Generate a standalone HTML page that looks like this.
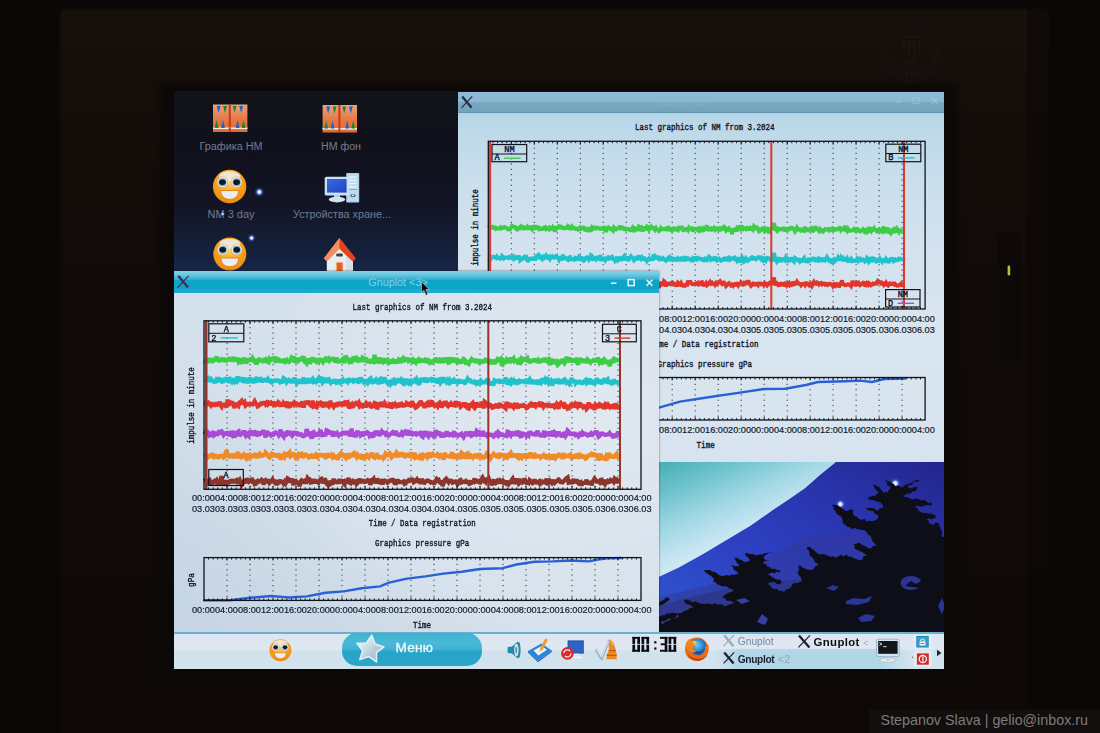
<!DOCTYPE html>
<html><head><meta charset="utf-8"><title>Gnuplot monitor</title>
<style>
html,body{margin:0;padding:0;background:#0b0707;}
body{width:1100px;height:733px;overflow:hidden;position:relative;font-family:"Liberation Sans",sans-serif;}
.abs{position:absolute;}
svg.layer{position:absolute;left:0;top:0;width:1100px;height:733px;overflow:visible;}
#bezel{left:60px;top:9px;width:990px;height:740px;background:linear-gradient(180deg,#17100b 0,#140e0a 90px,#100a09 300px,#0e0908 100%);border-radius:5px 5px 0 0;filter:blur(1.2px);}
#bezel2{left:160px;top:84px;width:798px;height:594px;background:#0b0807;filter:blur(2px);opacity:.85}
#screen{left:0;top:0;width:1100px;height:733px;clip-path:inset(91px 156px 64.5px 174px);}
#scr2{left:0;top:0;width:1100px;height:733px;filter:blur(0.45px);}
#desk{left:173px;top:90px;width:772px;height:580px;background:linear-gradient(180deg,#121219 0px,#11111d 61px,#121425 111px,#141b31 141px,#15213e 166px,#172746 181px,#172746 100%);}
.win{box-sizing:border-box;}
#wback{left:458px;top:91.5px;width:487px;height:370px;background:linear-gradient(180deg,#b2d3e5 21px,#bcd8e8 30px,#cadeec 88px,#d3e2ee 160px,#d9e5ef 240px,#d7e3ee 370px);}
#wback .tb{left:0;top:0;width:100%;height:21px;background:linear-gradient(180deg,#8ebcd4 0,#88b7cf 9.5px,#77a9c3 10.5px,#72a3be 19.5px,#6296b3 20px,#6296b3 21px);}
#wfront{left:173.5px;top:271.1px;width:485.3px;height:361.4px;background:linear-gradient(40deg,rgba(188,206,223,.65) 0,rgba(188,206,223,0) 38%),radial-gradient(ellipse 340px 240px at 400px 150px,#e1e8f0 0,#d9e4ee 60%,#d4e0eb 100%);box-shadow:0 0 2px rgba(10,20,40,.6);}
#wfront .tb{left:0;top:0;width:100%;height:21.6px;background:linear-gradient(180deg,#7fd0e4 0,#78cbe1 2.6px,#4fb9d6 6.2px,#2caccf 8.9px,#0ca6c9 9.5px,#0ca5c8 17.5px,#1eaad2 19px,#1fa8d0 21.6px);}
.ttl{color:#84d0e5;font-size:10.8px;line-height:21px;white-space:nowrap;}
#task{left:173px;top:631.5px;width:772px;height:38px;background:linear-gradient(180deg,#6cb0d2 0,#6cb0d2 1.6px,#dde6f0 2px,#dfe7f1 17px,#d0e2ec 20px,#d2e3ed 38px);}
#menu{left:342px;top:633px;width:140.2px;height:33.2px;border-radius:15px;background:linear-gradient(180deg,#3fb2d2 0,#4ab9d6 30%,#3eb1d1 50%,#27a4c9 56%,#2aa6cb 100%);}
#menu span{position:absolute;left:53.6px;top:7.2px;color:#eef8fb;font-size:13.6px;line-height:16px;letter-spacing:0.2px;-webkit-text-stroke:0.35px #eef8fb;}
.tk{font-size:10.2px;line-height:12px;white-space:nowrap;}
#wm{left:868.5px;top:708.5px;width:232px;height:25px;background:#130e0e;}
#wmt{left:880.6px;top:712.2px;color:#7f7a7a;font-size:14.3px;line-height:17px;white-space:nowrap;}
</style></head>
<body>
<div id="bezel" class="abs"></div>
<div id="bezel2" class="abs"></div>
<svg class="layer" viewBox="0 0 1100 733"><g opacity="0.8"><circle cx="911.3" cy="49.3" r="31.5" fill="none" stroke="#1a1210" stroke-width="1.6"/><circle cx="911.3" cy="49.3" r="26" fill="none" stroke="#1c1312" stroke-width="6" stroke-dasharray="2.2 1.8"/><circle cx="911.3" cy="49.3" r="20.5" fill="none" stroke="#181110" stroke-width="1.2"/><path d="M901 37 H921 M904 40 V52 M909 40 V56 M914 40 V56 M919 40 V52" stroke="#1e1513" stroke-width="2.2" fill="none"/><text x="911.3" y="66" text-anchor="middle" font-family="Liberation Sans, sans-serif" font-weight="bold" font-size="9" fill="#1e1513">98</text></g><rect x="998" y="232" width="24" height="130" fill="#0d0908" stroke="#130d0b" stroke-width="1" opacity="0.7"/><rect x="1007.6" y="265.5" width="2.6" height="10" rx="1.2" fill="#b4c23a"/><rect x="1027" y="8" width="24" height="725" fill="#0b0707" opacity="0.6"/></svg>
<div id="screen" class="abs"><div id="scr2" class="abs">
<div id="desk" class="abs"></div>
<svg class="layer" viewBox="0 0 1100 733">
<defs>
<radialGradient id="smg" cx="0.5" cy="0.35" r="0.7"><stop offset="0" stop-color="#ffd46a"/><stop offset="0.55" stop-color="#f6a21e"/><stop offset="1" stop-color="#e8860c"/></radialGradient>
<radialGradient id="star" cx="0.5" cy="0.5" r="0.5"><stop offset="0" stop-color="#ffffff"/><stop offset="0.3" stop-color="#c9d8ff"/><stop offset="0.55" stop-color="#4a66d8" stop-opacity="0.55"/><stop offset="1" stop-color="#2a3fb0" stop-opacity="0"/></radialGradient>
<linearGradient id="bg1" x1="0" y1="0" x2="0" y2="1"><stop offset="0" stop-color="#f0a078"/><stop offset="0.5" stop-color="#e37c48"/><stop offset="1" stop-color="#e06a30"/></linearGradient>
<linearGradient id="scr" x1="0" y1="0" x2="1" y2="1"><stop offset="0" stop-color="#2f6fe0"/><stop offset="1" stop-color="#2a3fc0"/></linearGradient>
<linearGradient id="roof" x1="0" y1="0" x2="1" y2="0"><stop offset="0" stop-color="#f7a070"/><stop offset="0.45" stop-color="#ee5a28"/><stop offset="1" stop-color="#d83c18"/></linearGradient>
<linearGradient id="silver" x1="0" y1="0" x2="1" y2="1"><stop offset="0" stop-color="#ffffff"/><stop offset="0.5" stop-color="#c4d4dc"/><stop offset="1" stop-color="#8fa6b4"/></linearGradient>
<radialGradient id="ffx" cx="0.45" cy="0.4" r="0.6"><stop offset="0" stop-color="#6fc8ee"/><stop offset="0.6" stop-color="#2c86d0"/><stop offset="1" stop-color="#1a4fa0"/></radialGradient>
<linearGradient id="sky" gradientUnits="userSpaceOnUse" x1="660" y1="462" x2="705" y2="562"><stop offset="0" stop-color="#46afb4"/><stop offset="0.29" stop-color="#6ec3cd"/><stop offset="0.58" stop-color="#a0d7e4"/><stop offset="0.83" stop-color="#c3e4f0"/><stop offset="1" stop-color="#d4ebf5"/></linearGradient>
<linearGradient id="hill" x1="0" y1="1" x2="1" y2="0"><stop offset="0" stop-color="#2f58cf"/><stop offset="0.4" stop-color="#2d40c2"/><stop offset="0.72" stop-color="#2833aa"/><stop offset="1" stop-color="#23248a"/></linearGradient>
<linearGradient id="sky2" x1="0" y1="0" x2="1" y2="0"><stop offset="0" stop-color="#ffffff" stop-opacity="0"/><stop offset="0.6" stop-color="#ffffff" stop-opacity="0.28"/></linearGradient>
<linearGradient id="hillshade" x1="0.2" y1="1" x2="1" y2="0"><stop offset="0" stop-color="#10104a" stop-opacity="0"/><stop offset="0.55" stop-color="#10104a" stop-opacity="0"/><stop offset="1" stop-color="#0c0c40" stop-opacity="0.55"/></linearGradient>
</defs>
<rect x="655" y="458" width="292" height="176" fill="url(#sky)"/><path d="M655 579 L658.6 577 L678.9 567.5 L702.8 554.3 L726.6 540 L750.5 525.7 L774.4 509 L788.7 499.4 L805 488.2 L820 475 L836 462 L840 458 L948 458 L948 636 L655 636 Z" fill="url(#hill)"/><path d="M655 598 C680 592 700 588 712 584 C740 574 770 556 800 540 C830 526 880 535 948 545 L948 640 L655 640 Z" fill="#33389a" opacity="0.55"/><path d="M655 607 C690 597 720 588 760 584 C800 578 850 575 948 575 L948 640 L655 640 Z" fill="#2c2f72" opacity="0.55"/><circle cx="840.4" cy="504.2" r="6" fill="url(#star)"/><circle cx="895.3" cy="483.4" r="6.5" fill="url(#star)"/><polygon points="773.7,551.5 771.4,552.1 769.1,552.8 767.3,554.3 764.9,555.6 763.7,557.9 766,560.2 769.2,560.3 766.7,560.7 764.3,561.2 762.5,563.2 765.5,563.7 767.3,566.3 769.7,567 771.7,569 774.4,568.7 777.3,569.9 780.4,570.3 779.2,572.7 776.9,571.5 774.4,573.4 772,572.3 769.7,573.5 767.3,574.6 769.9,575.2 772,577.1 774.4,578.2 776.7,579.6 779.8,579.5 781.6,581.8 780.9,583.5 779.2,584.2 776.7,584.1 774.7,581.9 772,582.3 769.4,582.6 767.3,584.2 770.1,585 771.6,588 774.4,589 777.1,589 779.1,591 781.9,590.7 784,592.6 785.6,589.7 788.7,589 791.3,587.2 792.3,584.2 795.2,582.9 798.3,583 800.4,581.4 803.5,582.4 805.8,581.2 807.9,579.4 808.4,582.5 806.7,585.5 807.8,588.6 807.4,591.6 808.6,594.7 806.7,597.7 807.4,600.8 806.6,603.8 806.8,606.9 808.4,609.9 808.2,613 808.7,616 808.8,619.1 809,622.1 808.4,625.2 807.6,628.2 809.1,631.3 807.9,634.3 804.7,633.9 801.5,634.8 798.3,634.8 795.1,633.5 791.9,634.4 788.7,634.8 785.6,634.4 782.4,633.8 779.2,635.5 776,633.1 772.8,635.6 769.6,633.7 766.5,633.5 763.3,635.6 760.1,633.6 756.9,634.7 753.7,634.1 750.5,635.6 747.3,635.5 744.2,635.2 741,633.2 737.8,635.1 734.6,633.7 731.4,633.2 728.2,633.2 725.1,634.8 721.9,634.7 718.7,634.3 715.5,633.6 712.3,635.4 709.1,633.7 706,633.6 702.8,633.4 699.6,635.6 696.4,633.2 693.2,635.4 690,634.8 686.8,634.1 683.7,633.3 680.5,634.8 677.3,633.2 674.1,634.2 670.9,634.8 667.7,634.8 664.6,635.2 661.4,635.4 658.2,635.3 655,634.3 655.5,631.2 656.3,628 655,624.8 657.2,623.3 659.5,622.5 662.5,624.2 664.6,622.4 667,621.6 669.2,620.4 671.5,619.1 674.1,618.8 676.6,617.8 678.9,616.4 677.7,614.8 678.9,612.9 681.5,612.9 683.6,611.2 686,610.5 688.4,609.5 690.5,607.8 693.2,608.1 691.5,605.4 688.4,604.5 685.5,603.6 684.1,600.9 684.9,599.2 687.8,600.1 690.8,600.9 693,602.4 695.8,601.3 698,602.8 701.1,603.6 704.3,604.3 707.5,603.3 709.9,603.9 712.2,604.6 714.8,603.2 717.1,604.5 719.5,604.6 722,604.2 724.2,606.3 726.7,605.7 728.9,604.4 731.4,604 733.8,603.3 731.8,601.3 729.3,600.8 726.7,600.9 725,598.1 721.9,597.3 724.2,595.4 726.7,593.7 729,592.5 731.7,591.9 733.8,590.2 731.4,589 728.8,588.3 726.7,586.6 724.2,586.2 721.7,586.3 719.4,585.1 717.1,584.2 715.3,581.9 712.3,581.8 714.1,580.4 713.5,578.2 711.3,576.2 708.7,574.6 706.3,572.9 704,571.1 705.2,569.9 707.7,570.1 710.2,570.1 712.3,571.8 714.9,572.1 717.1,573.4 719.3,574.9 721.6,575.9 724.3,575.8 726.6,575.1 729.2,575.8 731.4,574.6 733.9,574.9 736.3,574.3 738.6,573.4 736.5,571.3 733.8,569.9 733.2,567.2 731.4,565.1 733.3,565.3 735,566.3 737.5,566.2 739.8,565.1 737.6,563.7 736.2,561.5 735,559.1 733.8,556.7 735.4,558 737.4,557.9 739.1,559.5 741.7,559.9 743.4,561.5 745.9,562.2 748.2,561.1 750.5,560.3 748.9,558.4 747,556.7 745.1,555.1 745.8,552.7 748.1,553.6 750.5,554.3 753,553.9 755.3,555.3 757.7,555.1 760.1,554.3 762.7,554.6 764.9,553.1 767.9,553 770.9,552.8" fill="#0e0e18"/><polygon points="655,603.3 656.6,601.6 659.3,602.5 661,600.9 663.7,600.3 665.5,598 668.1,597.3 669.8,599.7 667.2,601.5 664.6,603.3 662.6,604.4 660.4,604.9 658.6,606.2 656.6,605.8 655,606.9 653.9,605.1" fill="#0e0e18"/><polygon points="655,616.4 657.2,615.1 659.9,616.5 662.2,615.2 664.7,615.3 666.8,613.4 669.3,613.4 671.7,612.9 674.1,612.7 676.5,613.2 678.9,612.9 677.1,614.2 676.5,616.4 674.5,618.3 672.1,619.4 669,618.3 666.9,620 664.6,621.1 661.9,621.3 660.3,624.1 657.4,624 655,624.8 655.6,622 654.3,619.2" fill="#0e0e18"/><polygon points="925.2,477.2 923.2,478.3 921.3,479.6 919.2,480.3 917.6,482 914.9,481 913.2,482.7 911.9,485 909.2,485.1 907.3,486.3 909.3,488.2 912,488.2 914.9,486.7 918,487.5 916.7,489.2 915.6,491 912.7,491.6 910.4,493.8 907.3,493.4 905,494.9 902.5,495.8 904.7,497.1 907.3,497.3 909.6,498.2 912.5,499.4 915.8,498.5 918.7,499.3 921.6,500.6 924.2,500.1 926.4,501.6 928.5,503.1 931.1,502.5 932.3,505.4 929.5,505.3 926.7,505 924,505.9 920.8,506.4 917.6,505.7 914.4,506.6 916.7,507.4 918,509.4 919.2,511.3 921.5,512.4 923.8,513.1 926.4,512.9 928.7,513.7 931.5,513.5 933.7,514.8 935.9,516.1 935.3,517.9 933.5,518.5 931.2,519.3 928.7,518.2 926.4,519.2 928.5,520.3 928.8,523.1 931.1,524 933.6,524.8 935.8,522.4 938.3,523.3 939.4,525.2 939.9,527.3 940.7,529.3 942.3,531.4 941.7,534 941.9,536.4 944.9,537.5 947.9,536.4 948.9,539.6 947.6,542.7 948.8,545.9 947.6,549.1 946.8,552.2 948.6,555.4 949.1,558.5 948.9,561.7 947.8,564.9 949.1,568 948.9,571.2 947.9,574.3 946.8,577.5 948.1,580.6 948.1,583.8 947.5,587 948.9,590.1 947.6,593.3 948.7,596.4 947.6,599.6 946.7,602.8 949,605.9 947.7,609.1 947.6,612.2 948.8,615.4 948.5,618.6 946.6,621.7 946.6,624.9 948.8,628 947.3,631.2 947.9,634.3 944.7,633.2 941.6,635 938.4,634.1 935.3,635.5 932.1,634.7 929,633.9 925.8,634.1 922.7,633.6 919.6,635.4 916.4,634.7 913.3,633.4 910.1,634.1 907,634.5 903.8,634.6 900.7,633.1 897.6,634.2 894.4,635.6 891.3,633.6 888.1,634.8 885,634.5 881.8,635.1 878.7,634.5 875.5,634.8 872.4,635.4 869.3,634 866.1,635.4 863,633.6 859.8,635.6 856.7,633.6 853.5,633.5 850.4,634.4 847.3,633.8 844.1,635 841,633.7 837.8,634.5 834.7,635 831.5,633.1 828.4,634.6 825.2,634.7 822.1,633.4 819,634.7 815.8,633.9 812.7,635.2 809.5,633.5 806.4,635 803.2,635.5 800.1,633.1 796.9,635.2 793.8,634.3 795,631.2 795.1,628.1 794.1,625 792.5,621.9 792.7,618.8 793,615.7 793.5,612.6 794.1,609.5 795,606.4 793.8,603.3 795.6,602.9 797.4,603.3 795.7,601.7 795.9,599.3 795,597.3 793.8,594.8 793.5,592.2 794.4,589.4 794.6,586.8 793.8,584.2 796.7,584.4 798.6,586.6 800.3,584.1 802.2,581.8 801.4,579.2 800.4,576.7 798.3,574.8 797.4,572.3 799.1,570.2 798.2,567.2 799.8,565.1 801.5,566.8 803.4,568.1 805.7,568.7 808,570 810.5,569.5 812.9,569.9 814.3,567.5 816.2,565.8 818.9,565.1 817.3,563.4 815.1,562.5 814.1,560.3 812.8,557.7 810,556.1 809.3,553.1 809.2,550.9 807.1,549.4 806.9,547.2 809.4,546.8 811.2,548 812.9,549.6 815,551.1 816.8,552.9 818.9,554.3 821.3,554.3 823.8,554.1 826.1,555.2 828.4,555.5 830.7,557 833.2,556.2 835.5,557.6 838,556.7 840.4,554.8 843.9,556.4 846.3,554.3 848.3,556.4 851.1,556.8 853.5,557.9 855.5,558.8 857.5,559.6 859.5,560.3 862.5,559.6 863.6,556.2 866.7,555.5 864.5,553.4 861.9,552 859.5,550.7 856.9,550 854.7,548.4 854.7,545.8 853.5,543.6 855.9,544.2 858.3,542.6 860.7,543.6 862.5,545.2 864.9,545.9 867,547.2 869,548.4 871.5,547.9 873.4,545.7 876.2,546 874.8,543.4 872.7,541.4 871.4,538.8 870.7,535.9 867.7,534.4 866.7,531.7 864.5,530.2 862,529.9 859.6,529.5 857.1,529.3 854.9,527.7 852,529.2 850,527.2 847.5,526.9 845.3,524.8 842.8,523.3 842.6,520.2 841.6,517.3 839.4,515.5 836.8,514.1 835.6,511.3 833.7,509.6 833.5,506.9 832,504.9 834.6,504.7 837.1,504.9 839.2,506.6 841.8,507.9 844,509.7 846.3,511.3 848.8,510.2 851.1,509 853.4,510.8 852.9,514.1 854.7,516.1 857.3,516.9 859.2,519.2 861.9,519.7 864.4,518.7 866.5,521.5 869,520.8 871.4,520.9 874.4,520.8 876.8,519.6 878.6,517.3 877.7,514.8 874.6,514 873.8,511.3 871.3,510.9 868.8,510.4 866.7,509 865.5,507.3 868.4,508.3 871.4,507.8 873.8,508.3 875.8,509.5 877.4,511.3 878.9,509.3 880.9,508.1 883.4,507.8 882.7,505.1 881.2,503 878.6,501.8 876.1,501.5 874,500 871.4,500.1 869,499.4 867.8,497 870.2,496.7 872.6,495.9 875,495.8 877,494.3 878.6,492.2 876.5,490.7 874.9,488.7 873.8,486.3 872.6,483.9 875,485.1 877.4,486.3 879.5,487.3 880.7,489.3 882.2,491 883.7,492.9 886.6,491.5 888.1,493.4 888.4,490.6 890.5,488.7 890,486.3 887.2,485.3 887,482.7 885.8,481.4 885.8,479.6 887.8,481.4 890.5,481.5 891.9,483.3 894.2,484.2 895.3,486.3 897.9,485.5 900.2,486.5 902.5,487.5 904.6,485.3 907.3,483.9 910,483.4 912.6,482.6 914.4,480.3 917.3,480.2 920.1,479.8 922.8,479" fill="#0e0e18"/><ellipse cx="911" cy="583" rx="10.5" ry="7" fill="#2a3596"/><path d="M905 586 l6 -5 l5 3 l7 -4 l-2 8 z" fill="#0e0e18"/><path d="M846 601 l8 -3 l10 1 l8 -3 l-3 6 l-12 3 l-11 -1 z" fill="#2a3596"/><path d="M858 618 l8 -4 l9 2 l-4 5 l-10 1 z" fill="#2a3596"/><path d="M826 588 l7 -3 l6 2 l-5 4 z" fill="#2a3596"/><path d="M757 622 l5 -8 l6 5 l-3 6 z" fill="#34409c"/><path d="M736 600 l8 -2 l6 3 l-8 3 z" fill="#34409c"/><path d="M938 606 l4 -8 l3 8 l-3 8 z" fill="#2a3596"/><rect x="655" y="628.5" width="292" height="6" fill="#0e0e18"/><g transform="translate(213 104.5)"><rect x="0" y="0" width="34.4" height="27.5" fill="url(#bg1)"/><rect x="15.7" y="0" width="2.2" height="27.5" fill="#cf3a1c"/><rect x="0" y="23" width="34.4" height="1.6" fill="#f4ece6"/><rect x="15.7" y="23" width="2.2" height="1.6" fill="#cf3a1c"/><polygon points="3.7,1.5 7.5,1.5 5.6,8.5" fill="#1f62c8"/><polygon points="10.1,1.5 13.9,1.5 12,8.5" fill="#0f8a3a"/><polygon points="19.7,1.5 23.5,1.5 21.6,8.5" fill="#0f8a3a"/><polygon points="26.3,1.5 30.1,1.5 28.2,8.5" fill="#1f62c8"/><polygon points="1.7,23.4 5.5,23.4 3.6,15.5" fill="#0f8a3a"/><polygon points="8.1,23.4 11.9,23.4 10,15.5" fill="#1f62c8"/><polygon points="22.7,23.4 26.5,23.4 24.6,15.5" fill="#1f62c8"/><polygon points="28.7,23.4 32.5,23.4 30.6,15.5" fill="#0f8a3a"/></g><g transform="translate(322.6 105)"><rect x="0" y="0" width="34.4" height="27.5" fill="url(#bg1)"/><rect x="15.7" y="0" width="2.2" height="27.5" fill="#cf3a1c"/><rect x="0" y="23" width="34.4" height="1.6" fill="#f4ece6"/><rect x="15.7" y="23" width="2.2" height="1.6" fill="#cf3a1c"/><polygon points="3.7,1.5 7.5,1.5 5.6,8.5" fill="#1f62c8"/><polygon points="10.1,1.5 13.9,1.5 12,8.5" fill="#0f8a3a"/><polygon points="19.7,1.5 23.5,1.5 21.6,8.5" fill="#0f8a3a"/><polygon points="26.3,1.5 30.1,1.5 28.2,8.5" fill="#1f62c8"/><polygon points="1.7,23.4 5.5,23.4 3.6,15.5" fill="#0f8a3a"/><polygon points="8.1,23.4 11.9,23.4 10,15.5" fill="#1f62c8"/><polygon points="22.7,23.4 26.5,23.4 24.6,15.5" fill="#1f62c8"/><polygon points="28.7,23.4 32.5,23.4 30.6,15.5" fill="#0f8a3a"/></g><text x="231" y="150.3" font-family="Liberation Sans, sans-serif" font-size="10" fill="#747c8e" text-anchor="middle" textLength="63" lengthAdjust="spacingAndGlyphs">Графика НМ</text><text x="341" y="150.3" font-family="Liberation Sans, sans-serif" font-size="10" fill="#747c8e" text-anchor="middle" textLength="40" lengthAdjust="spacingAndGlyphs">НМ фон</text><circle cx="259.3" cy="192" r="5.5" fill="url(#star)"/><circle cx="251.6" cy="238" r="4.5" fill="url(#star)"/><g transform="translate(229.6 186.5) scale(1.006)"><circle r="16.6" fill="url(#smg)"/><ellipse cx="0" cy="-10.2" rx="10.5" ry="5" fill="#f1ecf0" opacity="0.85"/><circle cx="-7.1" cy="-4.6" r="5.7" fill="#e8956a" opacity="0.6"/><circle cx="-7.1" cy="-4.4" r="5.1" fill="#e6f3fa"/><circle cx="-7.1" cy="-4.2" r="4" fill="#62aacd"/><ellipse cx="-7.1" cy="-4.3" rx="3.3" ry="2.7" fill="#16161f"/><circle cx="7" cy="-4.6" r="5.7" fill="#e8956a" opacity="0.6"/><circle cx="7" cy="-4.4" r="5.1" fill="#e6f3fa"/><circle cx="7" cy="-4.2" r="4" fill="#62aacd"/><ellipse cx="7" cy="-4.3" rx="3.3" ry="2.7" fill="#16161f"/><path d="M-9 4 H9.1 Q8.4 12.8 0 12.8 Q-8.4 12.8 -9 4 Z" fill="#ececf4" stroke="#e07c10" stroke-width="0.9"/></g><rect x="346.2" y="173" width="13" height="29.6" rx="1" fill="#a9cfe6"/><rect x="347.4" y="174.2" width="10.6" height="27.2" fill="#bcdcee"/><rect x="349" y="176.3" width="7.6" height="1.3" fill="#e8f4fb"/><rect x="349" y="179.6" width="7.6" height="1.3" fill="#e8f4fb"/><rect x="349" y="182.9" width="7.6" height="1.3" fill="#e8f4fb"/><rect x="349" y="186.2" width="7.6" height="1.3" fill="#e8f4fb"/><rect x="348.5" y="189" width="8.6" height="0.9" fill="#7ea8c4"/><ellipse cx="353" cy="195.6" rx="2.8" ry="1.7" fill="#50688a"/><ellipse cx="353" cy="195.4" rx="1.3" ry="0.8" fill="#e6eef4"/><rect x="324.7" y="176.7" width="24.4" height="18.8" rx="1.6" fill="#c7e2f4"/><rect x="327" y="179" width="19.6" height="13.6" fill="url(#scr)"/><rect x="334" y="195" width="6" height="3" fill="#b4d0e2"/><ellipse cx="337" cy="199.6" rx="8.3" ry="2.8" fill="#cfe4f0"/><text x="231" y="217.6" font-family="Liberation Sans, sans-serif" font-size="10" fill="#747c8e" text-anchor="middle" textLength="47" lengthAdjust="spacingAndGlyphs">NM 3 day</text><circle cx="222.6" cy="214" r="2.6" fill="url(#star)"/><text x="342" y="217.6" font-family="Liberation Sans, sans-serif" font-size="10" fill="#747c8e" text-anchor="middle" textLength="98" lengthAdjust="spacingAndGlyphs">Устройства хране...</text><g transform="translate(229.8 254) scale(0.994)"><circle r="16.6" fill="url(#smg)"/><ellipse cx="0" cy="-10.2" rx="10.5" ry="5" fill="#f1ecf0" opacity="0.85"/><circle cx="-7.1" cy="-4.6" r="5.7" fill="#e8956a" opacity="0.6"/><circle cx="-7.1" cy="-4.4" r="5.1" fill="#e6f3fa"/><circle cx="-7.1" cy="-4.2" r="4" fill="#62aacd"/><ellipse cx="-7.1" cy="-4.3" rx="3.3" ry="2.7" fill="#16161f"/><circle cx="7" cy="-4.6" r="5.7" fill="#e8956a" opacity="0.6"/><circle cx="7" cy="-4.4" r="5.1" fill="#e6f3fa"/><circle cx="7" cy="-4.2" r="4" fill="#62aacd"/><ellipse cx="7" cy="-4.3" rx="3.3" ry="2.7" fill="#16161f"/><path d="M-9 4 H9.1 Q8.4 12.8 0 12.8 Q-8.4 12.8 -9 4 Z" fill="#ececf4" stroke="#e07c10" stroke-width="0.9"/></g><polygon points="326.8,259 339.4,247.5 353,259 353,272 326.8,272" fill="#e9eef2"/><polygon points="339.4,247.5 353,259 353,272 346,272 346,256" fill="#cfd8e0" opacity="0.6"/><polygon points="339.4,238 355.8,258.5 352.6,261.2 339.4,248.6 327,261.2 323.8,258.5" fill="url(#roof)"/><polygon points="339.4,238 355.8,258.5 352.6,261.2 339.4,248.6" fill="#e2421c"/><polygon points="339.4,238 323.8,258.5 327,261.2 339.4,248.6" fill="#f58c5e"/><rect x="336.2" y="253.6" width="6.6" height="3" rx="1" fill="#5a3a30"/><rect x="335.6" y="261.8" width="8" height="10" fill="#f4d8c8"/><rect x="336.6" y="262.6" width="6" height="9.4" fill="#e2641e"/></svg>
<div id="wback" class="abs win"><div class="tb abs"></div></div>
<svg class="layer" viewBox="0 0 1100 733"><g opacity="1"><path d="M462.2 96.4 L471.6 107.8" stroke="#2a2f44" stroke-width="2.3" stroke-linecap="butt"/><path d="M472.2 96.4 L461.6 107.8" stroke="#2a2f44" stroke-width="1.2"/></g><g stroke="#a9cfe2" stroke-width="1.2" fill="none" opacity="0.55"><path d="M896.5 102 H901.5"/><rect x="913" y="98" width="6" height="5.6"/><path d="M931.6 98 L937.4 104 M937.4 98 L931.6 104"/></g><text x="652" y="106" font-family="Liberation Sans, sans-serif" font-size="10.8" fill="#8fbbd2" opacity="0.5">Gnuplot &lt;2&gt;</text><path d="M511.3 142.3 V308 M534.3 142.3 V308 M557.3 142.3 V308 M580.3 142.3 V308 M603.2 142.3 V308 M626.2 142.3 V308 M649.2 142.3 V308 M672.2 142.3 V308 M695.2 142.3 V308 M718.2 142.3 V308 M741.2 142.3 V308 M764.2 142.3 V308 M787.2 142.3 V308 M810.2 142.3 V308 M833.1 142.3 V308 M856.1 142.3 V308 M879.1 142.3 V308 M902.1 142.3 V308" stroke="#0c1018" stroke-opacity="0.95" stroke-width="0.95" stroke-dasharray="1.1 4.2" fill="none"/><polyline points="489,225.3 490,228.2 491,225.6 492,228.7 493,227.1 494,227.9 495,227.4 496,228.9 497,228.1 498,228.4 499,228.6 500,227.7 501,229.8 502,226.2 503,227.8 504,227.8 505,227 506,227.6 507,228.2 508,229.4 509,229.3 510,229.4 511,227.6 512,225.8 513,226.4 514,226.8 515,226.9 516,229.1 517,229.5 518,226.6 519,229.7 520,227 521,226.3 522,227.8 523,228.4 524,227.4 525,228.3 526,228.3 527,227.1 528,229.6 529,227 530,227.2 531,228.2 532,229.3 533,225.4 534,229.7 535,226.5 536,226.6 537,227.7 538,227.4 539,229 540,228.2 541,229 542,229.1 543,228.8 544,227.3 545,227 546,228.9 547,227.9 548,228.5 549,229.4 550,227.4 551,227.9 552,229.9 553,227.4 554,228.7 555,231.7 556,226.4 557,228.4 558,227.9 559,226.2 560,226.4 561,227.4 562,227 563,228.3 564,228.1 565,228.3 566,227.6 567,227.8 568,226 569,226.9 570,228.8 571,228.7 572,226.5 573,227.6 574,227.6 575,229 576,229.1 577,228.6 578,229.6 579,228.7 580,227.6 581,228.9 582,228.1 583,227.5 584,227.6 585,229.8 586,230.1 587,230.2 588,227.5 589,230.4 590,230 591,230.2 592,227.3 593,228.1 594,226 595,229.6 596,228.3 597,227.8 598,227.8 599,228.4 600,228.9 601,228.3 602,228.4 603,228.9 604,226.4 605,228.8 606,231.9 607,228.6 608,227.7 609,229.6 610,227.1 611,229.3 612,229.1 613,230.4 614,227.5 615,228.6 616,229.4 617,228.4 618,228.4 619,228.3 620,225.7 621,228.5 622,228.4 623,227.8 624,228.9 625,228.5 626,229.6 627,228.8 628,228.9 629,229.6 630,230.2 631,229.3 632,230 633,227.3 634,228.2 635,230.1 636,229.2 637,227.1 638,231 639,226.8 640,227.6 641,227.2 642,231.3 643,228.9 644,226.7 645,229.3 646,228.9 647,226.5 648,227 649,229.6 650,228.3 651,226.8 652,229.2 653,226.4 654,228.8 655,230.1 656,228.4 657,230.4 658,228.4 659,230.9 660,230.3 661,228.1 662,229.2 663,229.3 664,228.7 665,229.4 666,229.5 667,227.9 668,227.7 669,230.5 670,228.7 671,229.8 672,230.7 673,229.2 674,227.1 675,230.6 676,229.1 677,228.9 678,229.8 679,226.4 680,228.5 681,228 682,227.6 683,230.1 684,230.2 685,229.8 686,229 687,229.3 688,230.4 689,227.6 690,228.6 691,228.7 692,228.4 693,231.3 694,229.3 695,228.7 696,228.9 697,228.7 698,230.4 699,230.9 700,228.1 701,228.6 702,229.9 703,228.5 704,229.9 705,229.3 706,227.2 707,225.7 708,230.5 709,229.1 710,229.3 711,228.4 712,229.5 713,228.4 714,227.6 715,229.3 716,227.1 717,230.7 718,226.8 719,231.4 720,228.1 721,228.1 722,228.9 723,227.5 724,226.8 725,228.5 726,230.4 727,229 728,229.8 729,228.5 730,229.8 731,229.9 732,234 733,228.9 734,231 735,228.2 736,231.4 737,228.3 738,229.4 739,228.4 740,225.4 741,229.2 742,230.7 743,227.3 744,228 745,228.3 746,229.2 747,227.9 748,228.9 749,228.3 750,230.1 751,227.9 752,228.6 753,229.7 754,226.3 755,227.4 756,228.2 757,227.4 758,228.5 759,231.5 760,231.1 761,230.3 762,228.7 763,229.3 764,228.3 765,231.1 766,230.4 767,227.5 768,229 769,233.2 770,230.9 771,229.1 772,228.6 773,227.9 774,223 775,229.1 776,229.5 777,230.7 778,228.4 779,228.9 780,228.9 781,230.6 782,227.9 783,229.6 784,226.8 785,231.4 786,229.3 787,229.2 788,229.9 789,229.3 790,226.9 791,229.6 792,227.8 793,228.3 794,229.4 795,231.5 796,230.2 797,227.6 798,229.1 799,229.7 800,228.1 801,230.6 802,230.1 803,230.6 804,229 805,230.3 806,228.7 807,229.3 808,230.3 809,230.1 810,229 811,228.2 812,230.6 813,231 814,230.2 815,226.2 816,228.8 817,228.7 818,229.6 819,231 820,228.9 821,230 822,231.4 823,231.7 824,230.3 825,229.1 826,229.6 827,229.4 828,229.1 829,230.4 830,229.1 831,229.6 832,228.8 833,231.5 834,227.7 835,229.5 836,229.7 837,229.1 838,229.3 839,228.8 840,226.7 841,230.1 842,229 843,229.1 844,229.5 845,225.8 846,229.6 847,231 848,229 849,230.8 850,230.4 851,230.7 852,230.5 853,229.7 854,228.9 855,230 856,232.2 857,228.3 858,229.6 859,230.6 860,231.2 861,229.2 862,231.5 863,229.7 864,231.1 865,228.8 866,230.5 867,232.3 868,231.2 869,227 870,230.4 871,231.4 872,229.3 873,229.7 874,228.4 875,230.7 876,228.5 877,231.5 878,231.5 879,228.8 880,231.2 881,230.2 882,231.2 883,226.9 884,228.3 885,231.5 886,231.1 887,227.6 888,230.5 889,233.2 890,231.3 891,233.1 892,231.8 893,229.6 894,228.9 895,231.4 896,231 897,228.7 898,230.2 899,232 900,230.3 901,230.5 902,231.4 903,231.1 904,231.8" fill="none" stroke="#3ecd46" stroke-width="3.9" stroke-linejoin="miter" stroke-miterlimit="2.2"/>
<polyline points="489,258.8 490,261 491,257.3 492,256.8 493,257.2 494,256.9 495,257.7 496,258.2 497,256.5 498,257.9 499,258 500,258.9 501,258.3 502,255.9 503,256.8 504,258.5 505,257.6 506,257.5 507,257.6 508,258 509,256.9 510,257.1 511,258.1 512,257.9 513,256.6 514,259.2 515,258.6 516,257.2 517,257.9 518,257.6 519,255.7 520,260.4 521,259.5 522,259.4 523,258.3 524,257.1 525,257.8 526,255.2 527,260.2 528,260.7 529,259.5 530,258.7 531,258.9 532,258.4 533,258.7 534,257.3 535,260.3 536,257.3 537,256 538,255.2 539,258.6 540,256.7 541,258.1 542,259.1 543,256.9 544,258 545,256.8 546,255.5 547,257.8 548,258.1 549,256.9 550,258.8 551,257 552,256.1 553,257.4 554,257.8 555,257 556,256 557,256.8 558,258 559,259.8 560,257.7 561,257.7 562,260.3 563,254.7 564,259.2 565,256.9 566,258.7 567,259.4 568,260 569,257.6 570,257.2 571,260.5 572,257.8 573,259.5 574,259.8 575,258.1 576,259.1 577,258.1 578,258.7 579,256.5 580,257.3 581,259.1 582,258.4 583,259.7 584,257.4 585,259.3 586,258 587,257.2 588,257.5 589,259.8 590,258.7 591,255.2 592,255.9 593,259.1 594,258.6 595,258.2 596,259.4 597,257.7 598,258.2 599,258.7 600,255.4 601,257.2 602,260.8 603,258.6 604,258.8 605,260.1 606,257.1 607,258.5 608,257.4 609,258.6 610,257.8 611,257.2 612,256.8 613,260.2 614,258 615,260.6 616,259.1 617,256.7 618,260.1 619,259 620,258.4 621,260.6 622,258.3 623,257.4 624,256.3 625,260.4 626,258.1 627,256.6 628,259.7 629,259.6 630,258 631,256.3 632,257.8 633,258 634,260.3 635,259.2 636,257.9 637,258.9 638,258.8 639,255.7 640,257.7 641,259 642,257.7 643,260.3 644,256.8 645,260.7 646,258.2 647,260.9 648,259.5 649,258.4 650,260.6 651,258.2 652,260.4 653,257 654,258 655,256.2 656,257.5 657,257.2 658,258.3 659,256.2 660,259.3 661,259.5 662,259.2 663,258.1 664,259.1 665,259.9 666,260.7 667,259.5 668,258 669,257.3 670,261.1 671,257.8 672,258.2 673,259.7 674,258.9 675,259.7 676,259 677,259.7 678,258.2 679,259.2 680,259.5 681,260.8 682,256.8 683,259.8 684,259.9 685,257.6 686,257.8 687,260.8 688,257.4 689,259.3 690,259.3 691,259.8 692,261.6 693,258.4 694,259.3 695,256.7 696,259 697,259.6 698,258 699,258.7 700,258.6 701,259.3 702,257.8 703,261.3 704,259.9 705,258.8 706,260 707,260.4 708,258.5 709,256.7 710,257.5 711,259.8 712,259.1 713,258.5 714,260.7 715,256.7 716,258.8 717,260.4 718,259.5 719,258.7 720,260 721,260.8 722,259.9 723,259.2 724,260.9 725,258.4 726,258.6 727,259.4 728,257.9 729,257.5 730,259.8 731,259.1 732,258.4 733,258.1 734,259 735,257.8 736,258.9 737,260.7 738,259.1 739,257.6 740,262.7 741,259.3 742,257.3 743,258.9 744,261.8 745,261.2 746,258.5 747,259.8 748,260.8 749,260 750,258.6 751,257.9 752,259.9 753,257.5 754,257.9 755,258.2 756,259.3 757,258.1 758,257.2 759,257.9 760,258.5 761,256 762,260.2 763,260.8 764,258.2 765,258.6 766,260.2 767,257.8 768,257.9 769,258.7 770,259.3 771,260.9 772,257.6 773,261.5 774,252.9 775,257.8 776,258.4 777,261.8 778,260.8 779,258.7 780,258.9 781,261.7 782,260.1 783,259.1 784,258.9 785,260.1 786,257.2 787,258.4 788,260.5 789,259.3 790,260.3 791,259.4 792,257.6 793,260.5 794,261.6 795,258 796,258.7 797,259.2 798,260.4 799,260 800,261.6 801,260.3 802,260.6 803,259.1 804,258 805,262.2 806,259.1 807,262.8 808,260.5 809,258.1 810,260.6 811,260 812,259.8 813,257.4 814,259.2 815,260.3 816,259.4 817,260.6 818,260.9 819,258.5 820,259.4 821,259.2 822,261.7 823,258.1 824,259.7 825,260.5 826,259.3 827,257.1 828,258.7 829,260.4 830,259.7 831,260.1 832,263.8 833,260.1 834,259.2 835,260.9 836,259.6 837,259.5 838,257.5 839,259.4 840,259.4 841,257.2 842,258.9 843,258.1 844,261.2 845,259.3 846,259.6 847,258.3 848,261.1 849,260.9 850,259.9 851,258.8 852,261.3 853,261.2 854,260.5 855,260.7 856,260.7 857,259 858,260.6 859,258.5 860,258.5 861,260.5 862,260.2 863,259.5 864,260.4 865,261.6 866,260.8 867,257.7 868,258.5 869,261.8 870,260.6 871,261.9 872,257 873,259.2 874,257.7 875,260.4 876,261.5 877,261.2 878,259.8 879,260.5 880,258.7 881,260.1 882,261.5 883,258.6 884,260.5 885,261 886,258.7 887,259.9 888,261.5 889,261.6 890,259.5 891,258.8 892,258.7 893,260.3 894,258.1 895,260.5 896,260 897,259.7 898,261.1 899,257.1 900,260.5 901,258.1 902,260.3 903,258.1 904,260.8" fill="none" stroke="#1fc3cb" stroke-width="3.9" stroke-linejoin="miter" stroke-miterlimit="2.2"/>
<polyline points="489,282.4 490,282.7 491,281.9 492,284.5 493,281.2 494,282.8 495,283.2 496,281.9 497,283.7 498,281.3 499,282.2 500,283.2 501,281.7 502,281.9 503,284.1 504,283.9 505,283.2 506,281.8 507,283.9 508,284.2 509,281.9 510,284 511,285.2 512,281.8 513,284.7 514,282.9 515,283 516,282.4 517,285 518,282.5 519,282.3 520,283.5 521,284 522,284.2 523,283 524,284.3 525,284.1 526,285 527,282.7 528,283.7 529,284.3 530,283.7 531,283.8 532,284.1 533,282.4 534,283.6 535,283.1 536,282.3 537,284.1 538,282.3 539,283.6 540,283.8 541,281.5 542,285.2 543,283.6 544,283.5 545,282.1 546,281.9 547,285.3 548,283 549,283.2 550,285.8 551,284.5 552,284.1 553,281.7 554,283.9 555,284.7 556,283 557,282.6 558,283.6 559,282.2 560,282.7 561,280.3 562,283.5 563,283.5 564,279.9 565,281.6 566,282.7 567,285.4 568,281.9 569,283.1 570,283.5 571,283.4 572,281.3 573,283.9 574,283.8 575,283.8 576,282.8 577,281.2 578,285.8 579,283.5 580,284 581,281.4 582,283.3 583,281.5 584,279.1 585,285.6 586,283.4 587,283.9 588,283.4 589,282.5 590,284.4 591,284.8 592,280.1 593,284 594,281.5 595,285.7 596,282.3 597,285.7 598,284.9 599,283.6 600,286 601,284.4 602,283.5 603,284.6 604,281.4 605,285.2 606,283.6 607,283.9 608,285.3 609,283.5 610,283.3 611,283.4 612,284 613,284.5 614,284.3 615,283.4 616,282.8 617,285.1 618,281.4 619,282.3 620,285.6 621,283.4 622,282.7 623,282.5 624,285.7 625,282.2 626,283.4 627,285.1 628,283.9 629,285.2 630,281.5 631,282.4 632,282.4 633,281.8 634,281.1 635,284 636,284.4 637,282.5 638,282.6 639,283.1 640,279.7 641,284.6 642,283.1 643,283.8 644,282.6 645,285.4 646,287.5 647,282.1 648,282.7 649,283.8 650,285.8 651,284.6 652,282.2 653,282.3 654,282.7 655,285.1 656,282.4 657,285.1 658,286.3 659,284.2 660,285.5 661,283.6 662,282.2 663,285.9 664,281.1 665,282 666,286.6 667,282.6 668,284.7 669,282.6 670,285.4 671,283.1 672,282.7 673,282.8 674,284.5 675,284.9 676,282.7 677,286.6 678,282.7 679,283.5 680,284.4 681,283 682,285.3 683,285.7 684,285.6 685,285.7 686,283.6 687,286.3 688,280.6 689,283.6 690,280.8 691,283.1 692,284.1 693,284.1 694,284.3 695,283.9 696,283.3 697,284 698,282.9 699,284.4 700,283.6 701,282.3 702,282.2 703,286.1 704,284 705,284.4 706,283.1 707,285.3 708,284.4 709,283.2 710,281.8 711,283.6 712,282.9 713,285 714,282.4 715,284.5 716,282.9 717,284.1 718,283 719,282 720,281.2 721,282.9 722,284 723,282.7 724,282.5 725,284.1 726,286.1 727,285 728,283.8 729,283.1 730,284.3 731,285.5 732,284.7 733,285.6 734,283 735,286.3 736,282.7 737,284.1 738,285.4 739,282.8 740,284.9 741,282.6 742,283.7 743,284.4 744,283 745,283.8 746,282.3 747,281.8 748,282.9 749,282.2 750,284.4 751,285.9 752,284.8 753,283.7 754,284.6 755,283.9 756,284.5 757,283.9 758,285 759,282.3 760,284.6 761,282.6 762,285.5 763,282.4 764,284.8 765,283.2 766,283.8 767,285.3 768,283.8 769,284 770,282.6 771,282.4 772,283.2 773,283.1 774,277.4 775,285.5 776,282 777,283.3 778,284.8 779,286.3 780,282.7 781,284.7 782,282.5 783,286 784,284.3 785,284.8 786,281.8 787,285 788,283.7 789,282.9 790,285.5 791,284.9 792,286.1 793,281.6 794,283.9 795,284.1 796,283.5 797,281.6 798,282.8 799,283.9 800,283.9 801,285.3 802,284.1 803,283.7 804,283.8 805,285.1 806,283.2 807,283.4 808,284.3 809,285.2 810,282.3 811,283.8 812,285.8 813,284.1 814,282 815,283.5 816,283.8 817,282.3 818,282.7 819,284.3 820,283.3 821,282.9 822,284.4 823,283.6 824,283.9 825,283.7 826,286 827,283 828,284.8 829,284.3 830,283.7 831,284.3 832,284.4 833,286.3 834,284.8 835,285.6 836,282.6 837,287 838,283 839,287.4 840,283.7 841,282.9 842,280.6 843,284.3 844,284.5 845,285.2 846,285 847,284.7 848,284.2 849,284.8 850,284.9 851,286 852,282.5 853,282.7 854,281.3 855,284.7 856,284.8 857,284.3 858,281.1 859,284.6 860,285.3 861,284.6 862,283.6 863,283 864,281.7 865,286.3 866,285.1 867,283.3 868,284.7 869,283.1 870,283.9 871,285.3 872,284.6 873,283.6 874,284.1 875,283.8 876,282.8 877,283.3 878,280.9 879,281.6 880,282 881,283.4 882,282.7 883,283.4 884,285.1 885,284.4 886,282.8 887,284.8 888,285.5 889,283.7 890,283.4 891,285.3 892,282.9 893,284.7 894,282.2 895,284.9 896,284.8 897,285.7 898,285.6 899,285.4 900,284.7 901,283.7 902,286.4 903,284.5 904,284.9" fill="none" stroke="#e2352b" stroke-width="3.9" stroke-linejoin="miter" stroke-miterlimit="2.2"/>
<rect x="488.9" y="141.3" width="2.2" height="167.7" fill="#e2352b"/><rect x="770.3" y="141.3" width="2" height="167.7" fill="#e2352b"/><rect x="903" y="141.3" width="2" height="167.7" fill="#e2352b"/><rect x="488.3" y="141.3" width="436.8" height="167.7" fill="none" stroke="#10131c" stroke-width="1.3"/><path d="M511.3 141.3 v3.4 M511.3 309 v-3.4 M534.3 141.3 v3.4 M534.3 309 v-3.4 M557.3 141.3 v3.4 M557.3 309 v-3.4 M580.3 141.3 v3.4 M580.3 309 v-3.4 M603.2 141.3 v3.4 M603.2 309 v-3.4 M626.2 141.3 v3.4 M626.2 309 v-3.4 M649.2 141.3 v3.4 M649.2 309 v-3.4 M672.2 141.3 v3.4 M672.2 309 v-3.4 M695.2 141.3 v3.4 M695.2 309 v-3.4 M718.2 141.3 v3.4 M718.2 309 v-3.4 M741.2 141.3 v3.4 M741.2 309 v-3.4 M764.2 141.3 v3.4 M764.2 309 v-3.4 M787.2 141.3 v3.4 M787.2 309 v-3.4 M810.2 141.3 v3.4 M810.2 309 v-3.4 M833.1 141.3 v3.4 M833.1 309 v-3.4 M856.1 141.3 v3.4 M856.1 309 v-3.4 M879.1 141.3 v3.4 M879.1 309 v-3.4 M902.1 141.3 v3.4 M902.1 309 v-3.4 M492.9 141.3 v1.9 M492.9 309 v-1.9 M497.5 141.3 v1.9 M497.5 309 v-1.9 M502.1 141.3 v1.9 M502.1 309 v-1.9 M506.7 141.3 v1.9 M506.7 309 v-1.9 M515.9 141.3 v1.9 M515.9 309 v-1.9 M520.5 141.3 v1.9 M520.5 309 v-1.9 M525.1 141.3 v1.9 M525.1 309 v-1.9 M529.7 141.3 v1.9 M529.7 309 v-1.9 M538.9 141.3 v1.9 M538.9 309 v-1.9 M543.5 141.3 v1.9 M543.5 309 v-1.9 M548.1 141.3 v1.9 M548.1 309 v-1.9 M552.7 141.3 v1.9 M552.7 309 v-1.9 M561.9 141.3 v1.9 M561.9 309 v-1.9 M566.5 141.3 v1.9 M566.5 309 v-1.9 M571.1 141.3 v1.9 M571.1 309 v-1.9 M575.7 141.3 v1.9 M575.7 309 v-1.9 M584.9 141.3 v1.9 M584.9 309 v-1.9 M589.5 141.3 v1.9 M589.5 309 v-1.9 M594.1 141.3 v1.9 M594.1 309 v-1.9 M598.6 141.3 v1.9 M598.6 309 v-1.9 M607.8 141.3 v1.9 M607.8 309 v-1.9 M612.4 141.3 v1.9 M612.4 309 v-1.9 M617 141.3 v1.9 M617 309 v-1.9 M621.6 141.3 v1.9 M621.6 309 v-1.9 M630.8 141.3 v1.9 M630.8 309 v-1.9 M635.4 141.3 v1.9 M635.4 309 v-1.9 M640 141.3 v1.9 M640 309 v-1.9 M644.6 141.3 v1.9 M644.6 309 v-1.9 M653.8 141.3 v1.9 M653.8 309 v-1.9 M658.4 141.3 v1.9 M658.4 309 v-1.9 M663 141.3 v1.9 M663 309 v-1.9 M667.6 141.3 v1.9 M667.6 309 v-1.9 M676.8 141.3 v1.9 M676.8 309 v-1.9 M681.4 141.3 v1.9 M681.4 309 v-1.9 M686 141.3 v1.9 M686 309 v-1.9 M690.6 141.3 v1.9 M690.6 309 v-1.9 M699.8 141.3 v1.9 M699.8 309 v-1.9 M704.4 141.3 v1.9 M704.4 309 v-1.9 M709 141.3 v1.9 M709 309 v-1.9 M713.6 141.3 v1.9 M713.6 309 v-1.9 M722.8 141.3 v1.9 M722.8 309 v-1.9 M727.4 141.3 v1.9 M727.4 309 v-1.9 M732 141.3 v1.9 M732 309 v-1.9 M736.6 141.3 v1.9 M736.6 309 v-1.9 M745.8 141.3 v1.9 M745.8 309 v-1.9 M750.4 141.3 v1.9 M750.4 309 v-1.9 M755 141.3 v1.9 M755 309 v-1.9 M759.6 141.3 v1.9 M759.6 309 v-1.9 M768.8 141.3 v1.9 M768.8 309 v-1.9 M773.4 141.3 v1.9 M773.4 309 v-1.9 M778 141.3 v1.9 M778 309 v-1.9 M782.6 141.3 v1.9 M782.6 309 v-1.9 M791.8 141.3 v1.9 M791.8 309 v-1.9 M796.4 141.3 v1.9 M796.4 309 v-1.9 M801 141.3 v1.9 M801 309 v-1.9 M805.6 141.3 v1.9 M805.6 309 v-1.9 M814.8 141.3 v1.9 M814.8 309 v-1.9 M819.3 141.3 v1.9 M819.3 309 v-1.9 M823.9 141.3 v1.9 M823.9 309 v-1.9 M828.5 141.3 v1.9 M828.5 309 v-1.9 M837.7 141.3 v1.9 M837.7 309 v-1.9 M842.3 141.3 v1.9 M842.3 309 v-1.9 M846.9 141.3 v1.9 M846.9 309 v-1.9 M851.5 141.3 v1.9 M851.5 309 v-1.9 M860.7 141.3 v1.9 M860.7 309 v-1.9 M865.3 141.3 v1.9 M865.3 309 v-1.9 M869.9 141.3 v1.9 M869.9 309 v-1.9 M874.5 141.3 v1.9 M874.5 309 v-1.9 M883.7 141.3 v1.9 M883.7 309 v-1.9 M888.3 141.3 v1.9 M888.3 309 v-1.9 M892.9 141.3 v1.9 M892.9 309 v-1.9 M897.5 141.3 v1.9 M897.5 309 v-1.9 M906.7 141.3 v1.9 M906.7 309 v-1.9 M911.3 141.3 v1.9 M911.3 309 v-1.9 M915.9 141.3 v1.9 M915.9 309 v-1.9 M920.5 141.3 v1.9 M920.5 309 v-1.9 " stroke="#10131c" stroke-width="1" fill="none"/><rect x="492" y="144.5" width="34.7" height="17.2" fill="none" stroke="#10131c" stroke-width="1.2"/><path d="M492 154 H526.7" stroke="#10131c" stroke-width="1"/><text x="509.4" y="152.4" text-anchor="middle" font-family="Liberation Mono, monospace" font-size="8.6" fill="#10172a" stroke="#10172a" stroke-width="0.38">NM</text><text x="494.5" y="160.4" font-family="Liberation Mono, monospace" font-size="8.6" fill="#10172a" stroke="#10172a" stroke-width="0.38">A</text><path d="M504 158.2 H520.7" stroke="#3ecd46" stroke-width="1.4"/><rect x="885.8" y="144.2" width="35" height="17.5" fill="none" stroke="#10131c" stroke-width="1.2"/><path d="M885.8 153.5 H920.8" stroke="#10131c" stroke-width="1"/><text x="903.3" y="151.9" text-anchor="middle" font-family="Liberation Mono, monospace" font-size="8.6" fill="#10172a" stroke="#10172a" stroke-width="0.38">NM</text><text x="888.3" y="160.4" font-family="Liberation Mono, monospace" font-size="8.6" fill="#10172a" stroke="#10172a" stroke-width="0.38">B</text><path d="M897.8 157.9 H914.8" stroke="#1fc3cb" stroke-width="1.4"/><rect x="885.6" y="289.6" width="34.4" height="17.4" fill="none" stroke="#10131c" stroke-width="1.2"/><path d="M885.6 299 H920" stroke="#10131c" stroke-width="1"/><text x="902.8" y="297.4" text-anchor="middle" font-family="Liberation Mono, monospace" font-size="8.6" fill="#10172a" stroke="#10172a" stroke-width="0.38">NM</text><text x="888.1" y="305.7" font-family="Liberation Mono, monospace" font-size="8.6" fill="#10172a" stroke="#10172a" stroke-width="0.38">D</text><path d="M897.6 303.3 H914" stroke="#aa4bd7" stroke-width="1.4"/><text x="475.3" y="322" font-family="Liberation Sans, sans-serif" font-size="9.2" fill="#141b2e" stroke="#141b2e" stroke-width="0.2" textLength="459.5" lengthAdjust="spacingAndGlyphs">00:0004:0008:0012:0016:0020:0000:0004:0008:0012:0016:0020:0000:0004:0008:0012:0016:0020:0000:0004:00</text><text x="475.3" y="332.6" font-family="Liberation Sans, sans-serif" font-size="9.2" fill="#141b2e" stroke="#141b2e" stroke-width="0.2" textLength="459.5" lengthAdjust="spacingAndGlyphs">03.0303.0303.0303.0303.0303.0304.0304.0304.0304.0304.0304.0305.0305.0305.0305.0305.0305.0306.0306.03</text><text x="635" y="130" font-family="Liberation Mono, monospace" font-size="9.4" fill="#10172a" stroke="#10172a" stroke-width="0.38" textLength="139.5" lengthAdjust="spacingAndGlyphs" >Last graphics of NM from 3.2024</text><text transform="translate(477.6 227.5) rotate(-90)" text-anchor="middle" font-family="Liberation Mono, monospace" font-size="9.4" fill="#10172a" stroke="#10172a" stroke-width="0.38" textLength="76.5" lengthAdjust="spacingAndGlyphs">impulse in minute</text><text x="650.2" y="347" font-family="Liberation Mono, monospace" font-size="9.4" fill="#10172a" stroke="#10172a" stroke-width="0.38" textLength="108.4" lengthAdjust="spacingAndGlyphs" >Time / Data registration</text><text x="657.4" y="366.5" font-family="Liberation Mono, monospace" font-size="9.4" fill="#10172a" stroke="#10172a" stroke-width="0.38" textLength="94.6" lengthAdjust="spacingAndGlyphs" >Graphics pressure gPa</text><path d="M511.3 378.5 V419 M534.3 378.5 V419 M557.3 378.5 V419 M580.3 378.5 V419 M603.2 378.5 V419 M626.2 378.5 V419 M649.2 378.5 V419 M672.2 378.5 V419 M695.2 378.5 V419 M718.2 378.5 V419 M741.2 378.5 V419 M764.2 378.5 V419 M787.2 378.5 V419 M810.2 378.5 V419 M833.1 378.5 V419 M856.1 378.5 V419 M879.1 378.5 V419 M902.1 378.5 V419" stroke="#0c1018" stroke-opacity="0.95" stroke-width="0.95" stroke-dasharray="1.1 4.2" fill="none"/><polyline points="488.3,420 540,419.5 600,415 640,410 659,407.6 680,401.6 710,397 740,392.6 764,389 785,388.7 806,385 818,382 845,381.2 860,380.6 872,382 884,379 905,378.5" fill="none" stroke="#2a5fd6" stroke-width="2.4" stroke-linejoin="round" stroke-linecap="round"/><rect x="488.3" y="377.5" width="436.8" height="42.5" fill="none" stroke="#10131c" stroke-width="1.3"/><path d="M511.3 377.5 v2.8 M511.3 420 v-2.8 M534.3 377.5 v2.8 M534.3 420 v-2.8 M557.3 377.5 v2.8 M557.3 420 v-2.8 M580.3 377.5 v2.8 M580.3 420 v-2.8 M603.2 377.5 v2.8 M603.2 420 v-2.8 M626.2 377.5 v2.8 M626.2 420 v-2.8 M649.2 377.5 v2.8 M649.2 420 v-2.8 M672.2 377.5 v2.8 M672.2 420 v-2.8 M695.2 377.5 v2.8 M695.2 420 v-2.8 M718.2 377.5 v2.8 M718.2 420 v-2.8 M741.2 377.5 v2.8 M741.2 420 v-2.8 M764.2 377.5 v2.8 M764.2 420 v-2.8 M787.2 377.5 v2.8 M787.2 420 v-2.8 M810.2 377.5 v2.8 M810.2 420 v-2.8 M833.1 377.5 v2.8 M833.1 420 v-2.8 M856.1 377.5 v2.8 M856.1 420 v-2.8 M879.1 377.5 v2.8 M879.1 420 v-2.8 M902.1 377.5 v2.8 M902.1 420 v-2.8 M492.9 377.5 v1.9 M492.9 420 v-1.9 M497.5 377.5 v1.9 M497.5 420 v-1.9 M502.1 377.5 v1.9 M502.1 420 v-1.9 M506.7 377.5 v1.9 M506.7 420 v-1.9 M515.9 377.5 v1.9 M515.9 420 v-1.9 M520.5 377.5 v1.9 M520.5 420 v-1.9 M525.1 377.5 v1.9 M525.1 420 v-1.9 M529.7 377.5 v1.9 M529.7 420 v-1.9 M538.9 377.5 v1.9 M538.9 420 v-1.9 M543.5 377.5 v1.9 M543.5 420 v-1.9 M548.1 377.5 v1.9 M548.1 420 v-1.9 M552.7 377.5 v1.9 M552.7 420 v-1.9 M561.9 377.5 v1.9 M561.9 420 v-1.9 M566.5 377.5 v1.9 M566.5 420 v-1.9 M571.1 377.5 v1.9 M571.1 420 v-1.9 M575.7 377.5 v1.9 M575.7 420 v-1.9 M584.9 377.5 v1.9 M584.9 420 v-1.9 M589.5 377.5 v1.9 M589.5 420 v-1.9 M594.1 377.5 v1.9 M594.1 420 v-1.9 M598.6 377.5 v1.9 M598.6 420 v-1.9 M607.8 377.5 v1.9 M607.8 420 v-1.9 M612.4 377.5 v1.9 M612.4 420 v-1.9 M617 377.5 v1.9 M617 420 v-1.9 M621.6 377.5 v1.9 M621.6 420 v-1.9 M630.8 377.5 v1.9 M630.8 420 v-1.9 M635.4 377.5 v1.9 M635.4 420 v-1.9 M640 377.5 v1.9 M640 420 v-1.9 M644.6 377.5 v1.9 M644.6 420 v-1.9 M653.8 377.5 v1.9 M653.8 420 v-1.9 M658.4 377.5 v1.9 M658.4 420 v-1.9 M663 377.5 v1.9 M663 420 v-1.9 M667.6 377.5 v1.9 M667.6 420 v-1.9 M676.8 377.5 v1.9 M676.8 420 v-1.9 M681.4 377.5 v1.9 M681.4 420 v-1.9 M686 377.5 v1.9 M686 420 v-1.9 M690.6 377.5 v1.9 M690.6 420 v-1.9 M699.8 377.5 v1.9 M699.8 420 v-1.9 M704.4 377.5 v1.9 M704.4 420 v-1.9 M709 377.5 v1.9 M709 420 v-1.9 M713.6 377.5 v1.9 M713.6 420 v-1.9 M722.8 377.5 v1.9 M722.8 420 v-1.9 M727.4 377.5 v1.9 M727.4 420 v-1.9 M732 377.5 v1.9 M732 420 v-1.9 M736.6 377.5 v1.9 M736.6 420 v-1.9 M745.8 377.5 v1.9 M745.8 420 v-1.9 M750.4 377.5 v1.9 M750.4 420 v-1.9 M755 377.5 v1.9 M755 420 v-1.9 M759.6 377.5 v1.9 M759.6 420 v-1.9 M768.8 377.5 v1.9 M768.8 420 v-1.9 M773.4 377.5 v1.9 M773.4 420 v-1.9 M778 377.5 v1.9 M778 420 v-1.9 M782.6 377.5 v1.9 M782.6 420 v-1.9 M791.8 377.5 v1.9 M791.8 420 v-1.9 M796.4 377.5 v1.9 M796.4 420 v-1.9 M801 377.5 v1.9 M801 420 v-1.9 M805.6 377.5 v1.9 M805.6 420 v-1.9 M814.8 377.5 v1.9 M814.8 420 v-1.9 M819.3 377.5 v1.9 M819.3 420 v-1.9 M823.9 377.5 v1.9 M823.9 420 v-1.9 M828.5 377.5 v1.9 M828.5 420 v-1.9 M837.7 377.5 v1.9 M837.7 420 v-1.9 M842.3 377.5 v1.9 M842.3 420 v-1.9 M846.9 377.5 v1.9 M846.9 420 v-1.9 M851.5 377.5 v1.9 M851.5 420 v-1.9 M860.7 377.5 v1.9 M860.7 420 v-1.9 M865.3 377.5 v1.9 M865.3 420 v-1.9 M869.9 377.5 v1.9 M869.9 420 v-1.9 M874.5 377.5 v1.9 M874.5 420 v-1.9 M883.7 377.5 v1.9 M883.7 420 v-1.9 M888.3 377.5 v1.9 M888.3 420 v-1.9 M892.9 377.5 v1.9 M892.9 420 v-1.9 M897.5 377.5 v1.9 M897.5 420 v-1.9 M906.7 377.5 v1.9 M906.7 420 v-1.9 M911.3 377.5 v1.9 M911.3 420 v-1.9 M915.9 377.5 v1.9 M915.9 420 v-1.9 M920.5 377.5 v1.9 M920.5 420 v-1.9 " stroke="#10131c" stroke-width="1" fill="none"/><text x="475.3" y="433" font-family="Liberation Sans, sans-serif" font-size="9.2" fill="#141b2e" stroke="#141b2e" stroke-width="0.2" textLength="459.5" lengthAdjust="spacingAndGlyphs">00:0004:0008:0012:0016:0020:0000:0004:0008:0012:0016:0020:0000:0004:0008:0012:0016:0020:0000:0004:00</text><text x="696.5" y="448" font-family="Liberation Mono, monospace" font-size="9.4" fill="#10172a" stroke="#10172a" stroke-width="0.38" textLength="18.4" lengthAdjust="spacingAndGlyphs" >Time</text></svg>
<div id="wfront" class="abs win"><div class="tb abs"></div><div class="ttl abs" style="left:194.8px;top:0.6px">Gnuplot &lt;3&gt;</div></div>
<svg class="layer" viewBox="0 0 1100 733"><g opacity="1"><path d="M178.2 275.8 L188 287.6" stroke="#34305a" stroke-width="2.3" stroke-linecap="butt"/><path d="M188.6 275.8 L177.6 287.6" stroke="#34305a" stroke-width="1.2"/></g><g stroke="#eaf7fb" stroke-width="1.5" fill="none"><path d="M611 283.2 H616.5"/><rect x="628.2" y="279.6" width="6" height="6"/><path d="M646.6 279.8 L652.4 285.8 M652.4 279.8 L646.6 285.8"/></g><path d="M227 321.8 V488.3 M250 321.8 V488.3 M273 321.8 V488.3 M296 321.8 V488.3 M319 321.8 V488.3 M342 321.8 V488.3 M365 321.8 V488.3 M388 321.8 V488.3 M411 321.8 V488.3 M434 321.8 V488.3 M457 321.8 V488.3 M480 321.8 V488.3 M503 321.8 V488.3 M526 321.8 V488.3 M549 321.8 V488.3 M572 321.8 V488.3 M595 321.8 V488.3 M618 321.8 V488.3" stroke="#0c1018" stroke-opacity="0.95" stroke-width="0.95" stroke-dasharray="1.1 4.2" fill="none"/><polyline points="204.6,360.3 205.6,361.8 206.6,359.8 207.6,360 208.6,360.9 209.6,359.8 210.6,360.4 211.6,358.7 212.6,361.1 213.6,360.8 214.6,359.4 215.6,359.1 216.6,356.5 217.6,359.8 218.6,360.7 219.6,360.7 220.6,360.3 221.6,359.2 222.6,359.8 223.6,357.9 224.6,361.8 225.6,360.1 226.6,360.5 227.6,359.6 228.6,358.8 229.6,359.7 230.6,359.9 231.6,358.7 232.6,358.5 233.6,359.7 234.6,358.9 235.6,359.9 236.6,360.2 237.6,357.7 238.6,361.6 239.6,360.4 240.6,361.1 241.6,363.9 242.6,358 243.6,359.5 244.6,359.5 245.6,361.2 246.6,363.4 247.6,358.5 248.6,360.2 249.6,360.2 250.6,359.5 251.6,359.9 252.6,358 253.6,359.5 254.6,361.3 255.6,361.1 256.6,364.4 257.6,360.6 258.6,359.5 259.6,359.5 260.6,360.7 261.6,360.7 262.6,360.3 263.6,362.7 264.6,359.5 265.6,359.1 266.6,361.2 267.6,361.9 268.6,362.3 269.6,359 270.6,360.1 271.6,359.5 272.6,357.9 273.6,360.9 274.6,356.4 275.6,362.8 276.6,358.8 277.6,359 278.6,359.4 279.6,360.1 280.6,362.5 281.6,359.4 282.6,362.7 283.6,360.9 284.6,359 285.6,361.4 286.6,360.4 287.6,363 288.6,359.4 289.6,361.2 290.6,360.2 291.6,357.7 292.6,358.6 293.6,356.3 294.6,362.6 295.6,357.6 296.6,363.2 297.6,359.1 298.6,360.5 299.6,359.1 300.6,358.8 301.6,360.4 302.6,357.7 303.6,356.6 304.6,361.6 305.6,362.2 306.6,363.3 307.6,360.2 308.6,360.1 309.6,362 310.6,362.2 311.6,360.2 312.6,357.4 313.6,361.6 314.6,358.1 315.6,361.4 316.6,362 317.6,361.1 318.6,361.6 319.6,358.5 320.6,359.9 321.6,360.1 322.6,361.5 323.6,358.6 324.6,360.1 325.6,358.8 326.6,360 327.6,358.9 328.6,358.3 329.6,360.5 330.6,359.3 331.6,359.3 332.6,358.7 333.6,358.8 334.6,360.8 335.6,361.1 336.6,358 337.6,360.1 338.6,361.4 339.6,361.3 340.6,361.1 341.6,360 342.6,359.1 343.6,360.5 344.6,362.9 345.6,355.7 346.6,357.9 347.6,359.9 348.6,357.9 349.6,362 350.6,361.6 351.6,361.9 352.6,360.6 353.6,356.4 354.6,361.3 355.6,359.8 356.6,357.8 357.6,358.5 358.6,360.7 359.6,360.1 360.6,358 361.6,361.9 362.6,357.9 363.6,358.6 364.6,359 365.6,357.5 366.6,362.7 367.6,360.8 368.6,361.4 369.6,361.7 370.6,359.2 371.6,361.5 372.6,361.8 373.6,360.1 374.6,354.9 375.6,361.6 376.6,361 377.6,361.6 378.6,361.9 379.6,357.6 380.6,363.2 381.6,359.6 382.6,359.8 383.6,362 384.6,361.2 385.6,358.6 386.6,360.8 387.6,360 388.6,363 389.6,362.6 390.6,361.5 391.6,361 392.6,363 393.6,360.8 394.6,361.9 395.6,361.3 396.6,361.8 397.6,361.8 398.6,359.7 399.6,360.7 400.6,362.9 401.6,359.4 402.6,358.5 403.6,362 404.6,358.9 405.6,359.3 406.6,359.5 407.6,357.9 408.6,360.7 409.6,359.7 410.6,360.1 411.6,361 412.6,359.7 413.6,361.5 414.6,360.7 415.6,362 416.6,359.1 417.6,360.6 418.6,359.4 419.6,361.1 420.6,361 421.6,360.2 422.6,360.9 423.6,360.5 424.6,361 425.6,359.5 426.6,359.9 427.6,361.3 428.6,360.5 429.6,362 430.6,360.1 431.6,362.4 432.6,362.5 433.6,360.9 434.6,360.8 435.6,358 436.6,359.8 437.6,361.3 438.6,361.4 439.6,360.5 440.6,358.1 441.6,360.9 442.6,360.3 443.6,361.3 444.6,361.1 445.6,357.6 446.6,362.9 447.6,357.5 448.6,362.6 449.6,362.2 450.6,360.5 451.6,362.5 452.6,357.9 453.6,360.4 454.6,360 455.6,361 456.6,358 457.6,363.1 458.6,359.7 459.6,361.9 460.6,361.5 461.6,362 462.6,361 463.6,358.9 464.6,359.4 465.6,362.5 466.6,362 467.6,363.3 468.6,364 469.6,362 470.6,360.5 471.6,359.1 472.6,360.2 473.6,360.3 474.6,360.2 475.6,362.6 476.6,360.6 477.6,361.1 478.6,362 479.6,359.5 480.6,362 481.6,361.5 482.6,362 483.6,361.6 484.6,360.4 485.6,362.4 486.6,360.2 487.6,360.5 488.6,359 489.6,362.7 490.6,362.2 491.6,359.7 492.6,362.2 493.6,361.6 494.6,363.8 495.6,361.4 496.6,361.3 497.6,358.9 498.6,359.2 499.6,360 500.6,359 501.6,364.1 502.6,364.5 503.6,360.4 504.6,361.3 505.6,361.9 506.6,359.7 507.6,361 508.6,361.3 509.6,361.5 510.6,357.4 511.6,360.8 512.6,360 513.6,358.6 514.6,361.3 515.6,360.7 516.6,360.5 517.6,361.4 518.6,364.2 519.6,360.8 520.6,361.9 521.6,359 522.6,360.4 523.6,359 524.6,359.3 525.6,358.7 526.6,359.9 527.6,358.5 528.6,360.8 529.6,361.7 530.6,360.8 531.6,361.2 532.6,360.9 533.6,360.1 534.6,360 535.6,360.6 536.6,360.3 537.6,362.7 538.6,360.3 539.6,361.6 540.6,361.4 541.6,361 542.6,358.9 543.6,362 544.6,357.8 545.6,361.8 546.6,360.3 547.6,361.5 548.6,362.5 549.6,359.4 550.6,360.3 551.6,362.2 552.6,360.8 553.6,361.5 554.6,363.9 555.6,359.3 556.6,362.9 557.6,364.9 558.6,364 559.6,361.8 560.6,362.4 561.6,361.9 562.6,359 563.6,361.3 564.6,363.1 565.6,361.5 566.6,356.8 567.6,360.4 568.6,361.8 569.6,357.5 570.6,362 571.6,360.4 572.6,360.7 573.6,360.1 574.6,360.7 575.6,359.9 576.6,362.2 577.6,363.4 578.6,363.1 579.6,357.8 580.6,361.3 581.6,360.7 582.6,360.6 583.6,359 584.6,362.9 585.6,359.1 586.6,363.1 587.6,359.6 588.6,360.6 589.6,361.1 590.6,362.5 591.6,361.1 592.6,360.8 593.6,360 594.6,360.5 595.6,360.4 596.6,361.7 597.6,357.8 598.6,359.7 599.6,362.5 600.6,361.2 601.6,360.7 602.6,362.7 603.6,362.3 604.6,359.7 605.6,360.8 606.6,362.3 607.6,362.5 608.6,360.8 609.6,366.4 610.6,361.7 611.6,362.1 612.6,360.7 613.6,362.6 614.6,359.3 615.6,360.2 616.6,360 617.6,360 618.6,360.3 619.6,360.5" fill="none" stroke="#3ecd46" stroke-width="4.3" stroke-linejoin="miter" stroke-miterlimit="2.2"/>
<polyline points="204.6,380 205.6,380.2 206.6,379.7 207.6,378.8 208.6,381.8 209.6,378.6 210.6,378.4 211.6,380.4 212.6,380.8 213.6,381.4 214.6,381.2 215.6,382.7 216.6,379.5 217.6,380 218.6,377.7 219.6,379.8 220.6,380.3 221.6,381.2 222.6,383 223.6,378.3 224.6,379.9 225.6,379 226.6,377.7 227.6,382.1 228.6,380.5 229.6,382.4 230.6,379.9 231.6,381.3 232.6,378.5 233.6,380.7 234.6,382 235.6,380.7 236.6,381.4 237.6,376.5 238.6,380.4 239.6,380.3 240.6,377.3 241.6,381.1 242.6,377.4 243.6,382.7 244.6,380.8 245.6,379.7 246.6,380.3 247.6,380.4 248.6,383.2 249.6,377.4 250.6,380.2 251.6,380 252.6,381.3 253.6,382.7 254.6,379.6 255.6,378.8 256.6,380.9 257.6,380.6 258.6,379.1 259.6,379.4 260.6,379 261.6,382.1 262.6,380.4 263.6,380 264.6,379.8 265.6,380.4 266.6,380.1 267.6,379.1 268.6,382.3 269.6,378.9 270.6,381.8 271.6,382.4 272.6,381.2 273.6,380.9 274.6,380.3 275.6,380.7 276.6,380.5 277.6,380.2 278.6,380.7 279.6,381.8 280.6,380 281.6,383.3 282.6,380.7 283.6,378.2 284.6,379 285.6,380.2 286.6,382.4 287.6,381.2 288.6,380 289.6,380.9 290.6,381.4 291.6,380.5 292.6,380.9 293.6,382.5 294.6,377.4 295.6,381.9 296.6,383.3 297.6,381.2 298.6,380.9 299.6,383 300.6,379.6 301.6,383.7 302.6,380 303.6,377.6 304.6,382.2 305.6,382.2 306.6,381.1 307.6,383.2 308.6,380 309.6,378.8 310.6,383 311.6,379.8 312.6,378.9 313.6,382.1 314.6,381.8 315.6,379.2 316.6,381.3 317.6,379.8 318.6,382.3 319.6,377.9 320.6,378.6 321.6,378.5 322.6,382.3 323.6,381.1 324.6,380.5 325.6,378 326.6,380.7 327.6,380 328.6,382.4 329.6,380.5 330.6,382.3 331.6,380.4 332.6,382.8 333.6,381.1 334.6,381.5 335.6,379.5 336.6,382.8 337.6,382.7 338.6,381.9 339.6,379.9 340.6,382.1 341.6,380.6 342.6,379.6 343.6,381.4 344.6,380.7 345.6,381.1 346.6,381.3 347.6,382.1 348.6,378.4 349.6,380.8 350.6,380.4 351.6,380.5 352.6,380 353.6,381.5 354.6,380.9 355.6,380.1 356.6,380.1 357.6,381 358.6,383.3 359.6,377.6 360.6,379.8 361.6,379.3 362.6,380.7 363.6,382.1 364.6,383.9 365.6,379.3 366.6,382 367.6,383.2 368.6,381.4 369.6,379.1 370.6,378.4 371.6,381.2 372.6,383.6 373.6,381 374.6,381.3 375.6,380.1 376.6,382.9 377.6,379.8 378.6,384.2 379.6,379.3 380.6,378.8 381.6,383.2 382.6,381 383.6,382.3 384.6,377.3 385.6,381.2 386.6,382 387.6,383.1 388.6,381.7 389.6,381.8 390.6,384.1 391.6,382.6 392.6,380.2 393.6,379.8 394.6,385.2 395.6,379.4 396.6,381.8 397.6,381.5 398.6,378.4 399.6,380.8 400.6,381.4 401.6,379.2 402.6,379.9 403.6,385.1 404.6,383.9 405.6,381.9 406.6,378.8 407.6,382.3 408.6,383.4 409.6,382.1 410.6,381 411.6,382.8 412.6,381.9 413.6,381.3 414.6,380 415.6,381.1 416.6,379.3 417.6,381.4 418.6,383.5 419.6,383.2 420.6,380.4 421.6,378.1 422.6,380.3 423.6,380.5 424.6,380.3 425.6,377.7 426.6,382.6 427.6,380 428.6,379.9 429.6,379.9 430.6,379.3 431.6,380.4 432.6,379.3 433.6,378 434.6,382.3 435.6,380.5 436.6,380.2 437.6,383.2 438.6,379.7 439.6,379.3 440.6,382.7 441.6,381.5 442.6,382.9 443.6,377.2 444.6,381.6 445.6,379.3 446.6,381.7 447.6,380.2 448.6,382 449.6,380.3 450.6,382.4 451.6,381.4 452.6,380.7 453.6,379.9 454.6,383.1 455.6,381.5 456.6,381.1 457.6,382.6 458.6,381.5 459.6,383.5 460.6,380 461.6,381.7 462.6,381.8 463.6,381.6 464.6,382.9 465.6,382.6 466.6,380.7 467.6,378.8 468.6,380.3 469.6,380.2 470.6,380.5 471.6,383.1 472.6,380.6 473.6,383.8 474.6,382 475.6,383.1 476.6,380.9 477.6,382.7 478.6,384.7 479.6,381.9 480.6,380.8 481.6,382.7 482.6,382.1 483.6,382.2 484.6,382.4 485.6,381.4 486.6,382 487.6,378.6 488.6,381.8 489.6,385.1 490.6,383.2 491.6,383.1 492.6,384 493.6,384 494.6,380.3 495.6,380.8 496.6,381.2 497.6,381.4 498.6,380.8 499.6,381.8 500.6,381.3 501.6,382.9 502.6,380 503.6,381.9 504.6,381.4 505.6,377.6 506.6,381.3 507.6,384.3 508.6,382.9 509.6,380.7 510.6,380 511.6,383.3 512.6,382.3 513.6,380.8 514.6,383.3 515.6,380.6 516.6,384.8 517.6,379.5 518.6,383.7 519.6,381 520.6,381.7 521.6,381.1 522.6,381.3 523.6,381.2 524.6,382.1 525.6,381.9 526.6,379 527.6,383.7 528.6,380.8 529.6,379.4 530.6,381.8 531.6,381.2 532.6,382.2 533.6,381.5 534.6,382.5 535.6,382.2 536.6,382.7 537.6,380.1 538.6,382.8 539.6,382.7 540.6,383.2 541.6,380 542.6,379.7 543.6,381.5 544.6,382.1 545.6,379.3 546.6,380.7 547.6,379.6 548.6,382.5 549.6,381.5 550.6,380.6 551.6,383.7 552.6,383.8 553.6,379.4 554.6,381.1 555.6,381.7 556.6,381.4 557.6,379.1 558.6,383.9 559.6,381.2 560.6,382.2 561.6,381.4 562.6,382 563.6,379.9 564.6,379.3 565.6,380.5 566.6,382.9 567.6,382.3 568.6,381.9 569.6,383.8 570.6,382.6 571.6,378 572.6,380.3 573.6,382.2 574.6,379.8 575.6,383.1 576.6,381.8 577.6,381.9 578.6,382.4 579.6,381.7 580.6,382 581.6,383.1 582.6,383.3 583.6,382.4 584.6,380.9 585.6,380.1 586.6,382.7 587.6,381.4 588.6,384.2 589.6,380.2 590.6,380.1 591.6,380.8 592.6,383 593.6,383.3 594.6,383.4 595.6,382.2 596.6,378.2 597.6,381.8 598.6,381.3 599.6,381.1 600.6,382 601.6,384.2 602.6,380.7 603.6,379.9 604.6,381.1 605.6,381.6 606.6,380 607.6,379.2 608.6,383.4 609.6,381.9 610.6,381.8 611.6,384.7 612.6,382.9 613.6,379.5 614.6,381.7 615.6,382.4 616.6,382.1 617.6,382.7 618.6,382.9 619.6,382.1" fill="none" stroke="#1fc3cb" stroke-width="4.3" stroke-linejoin="miter" stroke-miterlimit="2.2"/>
<polyline points="204.6,403 205.6,402.5 206.6,405.5 207.6,403.7 208.6,402.7 209.6,403.6 210.6,405 211.6,402.5 212.6,405.1 213.6,405.2 214.6,405.2 215.6,404.1 216.6,404.6 217.6,402.7 218.6,405.7 219.6,401.7 220.6,405.2 221.6,406.6 222.6,404 223.6,406.2 224.6,403.1 225.6,405.9 226.6,407.3 227.6,399.6 228.6,404.6 229.6,404.1 230.6,402.5 231.6,403.1 232.6,403 233.6,405.3 234.6,408 235.6,404.6 236.6,404.8 237.6,404.2 238.6,405.5 239.6,402.4 240.6,401.9 241.6,400.8 242.6,403 243.6,403.3 244.6,402.2 245.6,405.5 246.6,404.6 247.6,404.1 248.6,404.4 249.6,404 250.6,404.1 251.6,404 252.6,404.4 253.6,403 254.6,401.3 255.6,403.3 256.6,404.3 257.6,406.4 258.6,405.7 259.6,404.9 260.6,403.7 261.6,403.9 262.6,403.1 263.6,402.9 264.6,402.9 265.6,404.4 266.6,402.9 267.6,404.2 268.6,402.4 269.6,403 270.6,402.6 271.6,405.3 272.6,403.4 273.6,403.2 274.6,406.7 275.6,403.7 276.6,403.4 277.6,405.5 278.6,402.4 279.6,403.2 280.6,406.6 281.6,403.8 282.6,406.2 283.6,403.2 284.6,404.4 285.6,405.3 286.6,403.5 287.6,402.1 288.6,405.4 289.6,407.8 290.6,404.1 291.6,404.4 292.6,403.6 293.6,404.6 294.6,402.6 295.6,403.5 296.6,403.6 297.6,405.9 298.6,404 299.6,406.9 300.6,403.8 301.6,403.1 302.6,403.8 303.6,407.4 304.6,403.7 305.6,401.2 306.6,404 307.6,400.8 308.6,403.3 309.6,403.4 310.6,405.2 311.6,405.9 312.6,400.7 313.6,406 314.6,405.3 315.6,406.7 316.6,407.2 317.6,403.4 318.6,404 319.6,403.4 320.6,402.6 321.6,403.1 322.6,407.1 323.6,405.6 324.6,405.4 325.6,402.2 326.6,404.8 327.6,405.3 328.6,406.2 329.6,402.6 330.6,402.4 331.6,405 332.6,405.2 333.6,406.6 334.6,404.7 335.6,405 336.6,406.8 337.6,402.6 338.6,403.9 339.6,403.4 340.6,403.6 341.6,405.9 342.6,403.9 343.6,404.3 344.6,402.7 345.6,403.6 346.6,402.3 347.6,402.1 348.6,406.7 349.6,407 350.6,405 351.6,404.1 352.6,407.6 353.6,405.7 354.6,404.1 355.6,403.8 356.6,401.6 357.6,403.6 358.6,402.5 359.6,405.9 360.6,404.9 361.6,406.4 362.6,406.5 363.6,404.9 364.6,404.8 365.6,407.1 366.6,403.7 367.6,404.9 368.6,403.9 369.6,403.8 370.6,406.3 371.6,406.7 372.6,406 373.6,406 374.6,403 375.6,403.4 376.6,407.4 377.6,407.6 378.6,402.4 379.6,406.6 380.6,404.6 381.6,401.9 382.6,406.8 383.6,405 384.6,403.1 385.6,404.8 386.6,406 387.6,405.8 388.6,406 389.6,404.3 390.6,403.1 391.6,408.3 392.6,406.1 393.6,402.3 394.6,407.1 395.6,404.8 396.6,406.3 397.6,405.9 398.6,404.7 399.6,405.4 400.6,404.1 401.6,403.7 402.6,405.2 403.6,406.9 404.6,403.9 405.6,406.4 406.6,403.3 407.6,404.2 408.6,403.8 409.6,405.1 410.6,405.4 411.6,402.8 412.6,402.7 413.6,404.7 414.6,406.2 415.6,404.2 416.6,407.1 417.6,406.4 418.6,404.2 419.6,404.3 420.6,400.9 421.6,402.9 422.6,404.5 423.6,404.6 424.6,408 425.6,404.1 426.6,403.5 427.6,402.8 428.6,405.1 429.6,406.4 430.6,402.1 431.6,400.7 432.6,406.1 433.6,404.5 434.6,405.8 435.6,404.9 436.6,404.6 437.6,406.1 438.6,403.5 439.6,402.7 440.6,404.7 441.6,407.1 442.6,405.4 443.6,401.9 444.6,404 445.6,401.2 446.6,404.8 447.6,405.7 448.6,402.7 449.6,404.6 450.6,403.6 451.6,406.4 452.6,403.5 453.6,405.1 454.6,405.4 455.6,401.2 456.6,404.6 457.6,404.1 458.6,402.1 459.6,404.7 460.6,406.8 461.6,406 462.6,404.9 463.6,406.2 464.6,402.7 465.6,405.8 466.6,405.5 467.6,408.2 468.6,408.6 469.6,403.5 470.6,405.4 471.6,404.2 472.6,403.2 473.6,406.8 474.6,407.9 475.6,406.1 476.6,402.7 477.6,405.1 478.6,405 479.6,407 480.6,403.4 481.6,404.8 482.6,401.7 483.6,408.5 484.6,401.8 485.6,402.6 486.6,405.9 487.6,403 488.6,407.9 489.6,404.6 490.6,405.1 491.6,406.5 492.6,404.7 493.6,407.2 494.6,406.7 495.6,406.5 496.6,403.7 497.6,408 498.6,406 499.6,404.6 500.6,404.9 501.6,406.3 502.6,406.3 503.6,406.1 504.6,407.5 505.6,408.3 506.6,401.9 507.6,406.1 508.6,405.5 509.6,407.4 510.6,404.9 511.6,405.3 512.6,405.9 513.6,407.3 514.6,405.2 515.6,406 516.6,403.2 517.6,406.6 518.6,406.8 519.6,405.8 520.6,405.6 521.6,406 522.6,405.8 523.6,405.1 524.6,406 525.6,406.5 526.6,408.1 527.6,407.5 528.6,406.7 529.6,404.7 530.6,404 531.6,406.9 532.6,405 533.6,402.9 534.6,405.1 535.6,406.3 536.6,404.5 537.6,404.8 538.6,404 539.6,406.5 540.6,404.9 541.6,403.6 542.6,404 543.6,406.6 544.6,405.1 545.6,405.1 546.6,404.8 547.6,405.9 548.6,405.1 549.6,404.9 550.6,405.4 551.6,407.2 552.6,404.2 553.6,405.6 554.6,407 555.6,405.9 556.6,404.1 557.6,405.9 558.6,408.8 559.6,404.2 560.6,403.1 561.6,404.9 562.6,402.2 563.6,405.9 564.6,408 565.6,405.9 566.6,407.4 567.6,404.9 568.6,409.9 569.6,405.5 570.6,408.3 571.6,403 572.6,405.2 573.6,405.6 574.6,405.8 575.6,403.7 576.6,404.7 577.6,406.4 578.6,404.5 579.6,402.6 580.6,405.7 581.6,405.4 582.6,406.7 583.6,404.5 584.6,408.2 585.6,405.5 586.6,408.9 587.6,407.9 588.6,402.5 589.6,407.1 590.6,405.7 591.6,406.9 592.6,406.4 593.6,407.2 594.6,409.7 595.6,404.8 596.6,405.2 597.6,407.9 598.6,405.9 599.6,404.2 600.6,404.8 601.6,406.3 602.6,407.1 603.6,405.9 604.6,406.8 605.6,404.1 606.6,404.6 607.6,408.4 608.6,405.5 609.6,406.8 610.6,404.8 611.6,407.6 612.6,404.6 613.6,409.1 614.6,403.7 615.6,405.8 616.6,405.6 617.6,408.7 618.6,407.3 619.6,405.9" fill="none" stroke="#e2352b" stroke-width="4.3" stroke-linejoin="miter" stroke-miterlimit="2.2"/>
<polyline points="204.6,434.5 205.6,431.6 206.6,431.2 207.6,432 208.6,434 209.6,432.1 210.6,435.2 211.6,435.3 212.6,433.6 213.6,435.1 214.6,433.5 215.6,434.3 216.6,433.7 217.6,434 218.6,432.2 219.6,432.8 220.6,431.6 221.6,431.3 222.6,432.8 223.6,434.9 224.6,433.5 225.6,433.3 226.6,433.6 227.6,432.9 228.6,432.9 229.6,436.1 230.6,434 231.6,435 232.6,430.9 233.6,434.2 234.6,437.5 235.6,433.9 236.6,433.3 237.6,431.9 238.6,431.4 239.6,436.1 240.6,434.5 241.6,431.9 242.6,434.5 243.6,430.6 244.6,433.9 245.6,435.5 246.6,433.7 247.6,434.8 248.6,435.8 249.6,433 250.6,430.6 251.6,432.7 252.6,435.4 253.6,432.4 254.6,432.1 255.6,434.5 256.6,434.8 257.6,432.9 258.6,433 259.6,434.3 260.6,433.8 261.6,432.6 262.6,432.3 263.6,430.3 264.6,433.7 265.6,437.3 266.6,431.4 267.6,432.6 268.6,434 269.6,433.9 270.6,435 271.6,432.8 272.6,436.4 273.6,433.4 274.6,433.4 275.6,432.5 276.6,433.1 277.6,433.4 278.6,435 279.6,432.9 280.6,429.7 281.6,434.9 282.6,435.5 283.6,436.6 284.6,431.9 285.6,436.5 286.6,432.5 287.6,432.2 288.6,433.1 289.6,431.2 290.6,433.8 291.6,435 292.6,431.8 293.6,433.4 294.6,431.6 295.6,434 296.6,431.6 297.6,435.8 298.6,434.4 299.6,434.5 300.6,434.1 301.6,434.5 302.6,436.1 303.6,436.3 304.6,435.6 305.6,435 306.6,429.2 307.6,431.8 308.6,436.4 309.6,431.7 310.6,434.9 311.6,438.6 312.6,432.7 313.6,432.2 314.6,434.1 315.6,432.5 316.6,436.5 317.6,432.6 318.6,436.1 319.6,431.9 320.6,429.8 321.6,434.8 322.6,436.4 323.6,432.8 324.6,434.5 325.6,434.5 326.6,430.4 327.6,430.8 328.6,432.7 329.6,432.8 330.6,432.7 331.6,431.1 332.6,436.3 333.6,433.9 334.6,433.1 335.6,433.4 336.6,435.9 337.6,433.6 338.6,435.1 339.6,433.4 340.6,435.9 341.6,433.7 342.6,433.2 343.6,431.4 344.6,434.6 345.6,432.9 346.6,432.7 347.6,432.6 348.6,433.9 349.6,433.8 350.6,436.4 351.6,428.6 352.6,436.2 353.6,435.2 354.6,432.3 355.6,437.2 356.6,433.6 357.6,430.8 358.6,435.1 359.6,431.9 360.6,435.3 361.6,434.5 362.6,433.7 363.6,434.7 364.6,434.2 365.6,431.4 366.6,434.7 367.6,432.5 368.6,433.1 369.6,435.9 370.6,434.9 371.6,432.7 372.6,436 373.6,435.8 374.6,433.1 375.6,433.4 376.6,431 377.6,433.1 378.6,433.7 379.6,435.9 380.6,432.9 381.6,431.4 382.6,432.8 383.6,432.5 384.6,433.1 385.6,434.4 386.6,433.1 387.6,435 388.6,435.6 389.6,434.7 390.6,434 391.6,433.3 392.6,432.3 393.6,433.3 394.6,434.7 395.6,430.8 396.6,434.2 397.6,434.4 398.6,435.2 399.6,435.2 400.6,434.4 401.6,432.8 402.6,434.4 403.6,432.5 404.6,431.8 405.6,434.7 406.6,432.8 407.6,431.8 408.6,430.4 409.6,435.6 410.6,431.5 411.6,433.1 412.6,434.3 413.6,433.5 414.6,433.8 415.6,433.3 416.6,434.6 417.6,434.1 418.6,433.7 419.6,432.9 420.6,432.8 421.6,436.2 422.6,436.8 423.6,431.6 424.6,432.9 425.6,436.7 426.6,431.5 427.6,434.3 428.6,436.1 429.6,434.1 430.6,433.4 431.6,433.8 432.6,435.4 433.6,436.4 434.6,436.5 435.6,430.3 436.6,433.3 437.6,431.3 438.6,435.8 439.6,432 440.6,434.6 441.6,437.3 442.6,434.4 443.6,434.7 444.6,435.5 445.6,434.9 446.6,431.4 447.6,434.5 448.6,434 449.6,435.1 450.6,434.3 451.6,434.4 452.6,435.1 453.6,432.7 454.6,432.9 455.6,434.3 456.6,436.7 457.6,433.6 458.6,435.3 459.6,434.5 460.6,434.7 461.6,433.9 462.6,435.8 463.6,437.2 464.6,435.3 465.6,433.9 466.6,431.9 467.6,435.6 468.6,434.3 469.6,434.2 470.6,431.6 471.6,435.6 472.6,435.1 473.6,433.3 474.6,433.2 475.6,434.1 476.6,431.1 477.6,432.1 478.6,430.7 479.6,436.3 480.6,433.6 481.6,431.1 482.6,433.9 483.6,433.2 484.6,436.3 485.6,433.7 486.6,435.3 487.6,434 488.6,434.4 489.6,434.7 490.6,434.9 491.6,434.8 492.6,435.8 493.6,436.5 494.6,435.2 495.6,433.9 496.6,434.7 497.6,433 498.6,435.2 499.6,433.7 500.6,434.8 501.6,434.3 502.6,434.5 503.6,435.3 504.6,435.6 505.6,435.5 506.6,435.9 507.6,431.7 508.6,432 509.6,433.7 510.6,435 511.6,432 512.6,433.5 513.6,434.4 514.6,434.2 515.6,433 516.6,434.2 517.6,434.6 518.6,432.4 519.6,432.7 520.6,436.3 521.6,436.1 522.6,434 523.6,432.6 524.6,435.7 525.6,433.1 526.6,435.8 527.6,434.5 528.6,435.4 529.6,431.4 530.6,433.2 531.6,433.4 532.6,434.1 533.6,434.2 534.6,432.5 535.6,436.1 536.6,432.7 537.6,431 538.6,433.5 539.6,434.8 540.6,435.7 541.6,435.7 542.6,435.7 543.6,432.5 544.6,431.2 545.6,435.1 546.6,434.5 547.6,434.7 548.6,433.1 549.6,433 550.6,434.5 551.6,435.6 552.6,430.7 553.6,436.6 554.6,432.3 555.6,433 556.6,435.2 557.6,434.5 558.6,431.8 559.6,434.6 560.6,433.1 561.6,437.3 562.6,434.6 563.6,433.5 564.6,433.4 565.6,435.9 566.6,434.4 567.6,430.6 568.6,431.4 569.6,435.1 570.6,432.4 571.6,435.7 572.6,432.2 573.6,435.4 574.6,432.5 575.6,435 576.6,434.5 577.6,434.6 578.6,436.3 579.6,435.4 580.6,431.7 581.6,436.3 582.6,432.9 583.6,434.1 584.6,433.8 585.6,433.9 586.6,435 587.6,435.5 588.6,434.9 589.6,434.1 590.6,433.4 591.6,436 592.6,434.4 593.6,433.7 594.6,432.6 595.6,432.9 596.6,430.9 597.6,434.5 598.6,436.6 599.6,435.8 600.6,433.9 601.6,434.1 602.6,433.5 603.6,434 604.6,434.7 605.6,434.9 606.6,434.7 607.6,434.4 608.6,434.4 609.6,433.2 610.6,434.7 611.6,435 612.6,436 613.6,438.1 614.6,434.1 615.6,435.5 616.6,436.9 617.6,433.1 618.6,433.1 619.6,434.8" fill="none" stroke="#aa4bd7" stroke-width="4.3" stroke-linejoin="miter" stroke-miterlimit="2.2"/>
<polyline points="204.6,457.3 205.6,456.4 206.6,454.3 207.6,457.4 208.6,456.2 209.6,456 210.6,457.8 211.6,453.4 212.6,455.2 213.6,456.5 214.6,454.4 215.6,456.6 216.6,457 217.6,457.2 218.6,457.4 219.6,454.8 220.6,457.1 221.6,454.4 222.6,456.5 223.6,457.5 224.6,456.5 225.6,452.7 226.6,450.2 227.6,455.7 228.6,456.3 229.6,454.3 230.6,457.8 231.6,453.7 232.6,457.2 233.6,454.8 234.6,458 235.6,454.8 236.6,454.7 237.6,453.3 238.6,453.7 239.6,458.5 240.6,454.4 241.6,456.9 242.6,456 243.6,454.8 244.6,457.2 245.6,458 246.6,453.4 247.6,457.9 248.6,456.8 249.6,455.6 250.6,458.9 251.6,454.2 252.6,456.9 253.6,455.2 254.6,454.6 255.6,454.8 256.6,458 257.6,453.6 258.6,455.5 259.6,454.1 260.6,456 261.6,455.9 262.6,455.7 263.6,453.7 264.6,456 265.6,452.5 266.6,453.5 267.6,455.2 268.6,456.6 269.6,457.3 270.6,455.3 271.6,454 272.6,455.4 273.6,454.6 274.6,454.8 275.6,455.7 276.6,456.1 277.6,456 278.6,453.7 279.6,455.5 280.6,459.4 281.6,457.8 282.6,456.4 283.6,454.9 284.6,456.7 285.6,454.6 286.6,452.5 287.6,456.7 288.6,453.7 289.6,452.5 290.6,456.3 291.6,455.6 292.6,454.6 293.6,454 294.6,454.5 295.6,457.2 296.6,456.5 297.6,457.4 298.6,454.4 299.6,455.2 300.6,453.8 301.6,453.6 302.6,456.4 303.6,456.5 304.6,454.8 305.6,454.5 306.6,455.5 307.6,455.7 308.6,457.2 309.6,456.3 310.6,455.8 311.6,458.2 312.6,454.4 313.6,456.1 314.6,455.4 315.6,458.2 316.6,455.2 317.6,456.5 318.6,453.3 319.6,456.8 320.6,453.3 321.6,456.7 322.6,455.4 323.6,455.2 324.6,455.3 325.6,457.4 326.6,457.1 327.6,455.1 328.6,455.6 329.6,453.5 330.6,457 331.6,455.3 332.6,457.2 333.6,456 334.6,458.8 335.6,454.8 336.6,457.8 337.6,459.4 338.6,456.9 339.6,454.4 340.6,453.4 341.6,456.8 342.6,454.5 343.6,455.4 344.6,456.8 345.6,457.8 346.6,453.6 347.6,457 348.6,456.9 349.6,453.4 350.6,455.8 351.6,454.8 352.6,455.1 353.6,453.9 354.6,456.8 355.6,455.2 356.6,456.9 357.6,454.8 358.6,455.9 359.6,458 360.6,453.9 361.6,458 362.6,458.2 363.6,456.9 364.6,458.1 365.6,456.2 366.6,455.1 367.6,456.4 368.6,457.3 369.6,454.1 370.6,457.5 371.6,452.7 372.6,455.7 373.6,457.2 374.6,457.7 375.6,456 376.6,453.5 377.6,455.2 378.6,457.2 379.6,458.8 380.6,456.3 381.6,458.5 382.6,455.4 383.6,458.1 384.6,456.9 385.6,453.5 386.6,454.3 387.6,456.6 388.6,454.1 389.6,453.3 390.6,455 391.6,457.3 392.6,456.3 393.6,454.8 394.6,454.6 395.6,455.2 396.6,452.6 397.6,453.7 398.6,456.8 399.6,455.3 400.6,453.9 401.6,454 402.6,454 403.6,456 404.6,456.3 405.6,453.4 406.6,455.5 407.6,455.4 408.6,455.8 409.6,454.5 410.6,455.8 411.6,454.7 412.6,456.2 413.6,456.9 414.6,452.7 415.6,457.6 416.6,457 417.6,456.7 418.6,457.6 419.6,456.1 420.6,457.6 421.6,456 422.6,457.4 423.6,455.2 424.6,456 425.6,455.7 426.6,454.9 427.6,457.4 428.6,456.4 429.6,454.2 430.6,454.2 431.6,455.6 432.6,454.4 433.6,456.7 434.6,454.1 435.6,455.7 436.6,456 437.6,454.2 438.6,455 439.6,456.5 440.6,455.3 441.6,456.1 442.6,455.5 443.6,459.8 444.6,452.7 445.6,455.5 446.6,455.7 447.6,456.1 448.6,456.5 449.6,456.6 450.6,456.6 451.6,453.9 452.6,454 453.6,457.1 454.6,456.9 455.6,454.1 456.6,456.7 457.6,456 458.6,459 459.6,454.7 460.6,455.9 461.6,452.8 462.6,453.7 463.6,456.3 464.6,458.1 465.6,455.6 466.6,453.9 467.6,453.4 468.6,458.7 469.6,455.2 470.6,455.1 471.6,456.3 472.6,457.4 473.6,455 474.6,458.1 475.6,453.8 476.6,456.8 477.6,455.2 478.6,458.7 479.6,454.9 480.6,455.1 481.6,457 482.6,457.7 483.6,457.6 484.6,457.3 485.6,455.7 486.6,453.9 487.6,455.1 488.6,456 489.6,456.3 490.6,458.2 491.6,456.4 492.6,455.1 493.6,453.9 494.6,455.3 495.6,455.2 496.6,456.4 497.6,456.7 498.6,455.2 499.6,456.3 500.6,454.9 501.6,455.5 502.6,455.3 503.6,453.9 504.6,457.1 505.6,456 506.6,457 507.6,453.8 508.6,455.6 509.6,454.1 510.6,453 511.6,456 512.6,455.9 513.6,455 514.6,455.6 515.6,455.4 516.6,456.9 517.6,457.4 518.6,453.6 519.6,457.5 520.6,456.6 521.6,457.7 522.6,455.6 523.6,455.7 524.6,456.3 525.6,453.7 526.6,456.9 527.6,456.9 528.6,455.2 529.6,455.8 530.6,452.7 531.6,455.9 532.6,456.4 533.6,453.8 534.6,458.3 535.6,455.2 536.6,456.1 537.6,456.2 538.6,455.9 539.6,456.1 540.6,457.5 541.6,456.3 542.6,456.2 543.6,455.1 544.6,457 545.6,457.5 546.6,454.5 547.6,456.6 548.6,455.8 549.6,458.6 550.6,454.4 551.6,457.9 552.6,458 553.6,454.6 554.6,456.1 555.6,457.9 556.6,456.4 557.6,456.1 558.6,454.7 559.6,455.2 560.6,455.9 561.6,456.9 562.6,455.5 563.6,453.3 564.6,456.8 565.6,456.5 566.6,456.1 567.6,455.9 568.6,455.5 569.6,456.3 570.6,455 571.6,457.3 572.6,456.2 573.6,456.1 574.6,458.6 575.6,454.2 576.6,455.5 577.6,455 578.6,456.7 579.6,455.6 580.6,458.3 581.6,454.2 582.6,458.5 583.6,455 584.6,457.4 585.6,458.7 586.6,458.1 587.6,456.1 588.6,455.3 589.6,454.9 590.6,455.1 591.6,453.9 592.6,454.9 593.6,454.4 594.6,455.4 595.6,454.8 596.6,455.1 597.6,456.2 598.6,460.2 599.6,457.8 600.6,453.6 601.6,459 602.6,457.8 603.6,458.3 604.6,457.4 605.6,460.7 606.6,456.1 607.6,457.2 608.6,454.6 609.6,454.5 610.6,456.6 611.6,456.4 612.6,456.9 613.6,457 614.6,456 615.6,455 616.6,453.9 617.6,458.2 618.6,456.7 619.6,454.5" fill="none" stroke="#f08c28" stroke-width="4.3" stroke-linejoin="miter" stroke-miterlimit="2.2"/>
<polyline points="204.6,480.9 205.6,479.3 206.6,482 207.6,485.5 208.6,481 209.6,480.2 210.6,482.5 211.6,485 212.6,482.7 213.6,481.5 214.6,480.8 215.6,481.9 216.6,480.6 217.6,483.5 218.6,483.3 219.6,481.2 220.6,479.9 221.6,476.1 222.6,484.4 223.6,483.2 224.6,482.3 225.6,482.8 226.6,480.5 227.6,482.8 228.6,482.5 229.6,482.1 230.6,480.9 231.6,480.8 232.6,482.7 233.6,479.3 234.6,483 235.6,480.6 236.6,480 237.6,482.1 238.6,481.6 239.6,480.2 240.6,483 241.6,485.1 242.6,483.7 243.6,481.4 244.6,481 245.6,483 246.6,478.4 247.6,480.9 248.6,481.8 249.6,480.5 250.6,479.8 251.6,481 252.6,480 253.6,481.5 254.6,484.2 255.6,483.9 256.6,481.4 257.6,480.8 258.6,481.8 259.6,481.2 260.6,481 261.6,479.7 262.6,480.5 263.6,484.5 264.6,481.3 265.6,480.3 266.6,481.5 267.6,481.7 268.6,479.4 269.6,482.7 270.6,481.7 271.6,481.4 272.6,479.6 273.6,481.7 274.6,482.6 275.6,479.8 276.6,485 277.6,483 278.6,482.6 279.6,481.5 280.6,480 281.6,483.4 282.6,481.3 283.6,483.3 284.6,481.7 285.6,483.4 286.6,481.6 287.6,478.5 288.6,479.1 289.6,481.1 290.6,481.2 291.6,478.6 292.6,481.8 293.6,485.1 294.6,480.9 295.6,480.8 296.6,482.4 297.6,483.2 298.6,481.3 299.6,486.3 300.6,481.7 301.6,480.2 302.6,480.7 303.6,481.1 304.6,483.5 305.6,481 306.6,481.5 307.6,478 308.6,479.1 309.6,479.3 310.6,482.5 311.6,482.3 312.6,479.4 313.6,482.1 314.6,479.3 315.6,483.4 316.6,480.1 317.6,481.6 318.6,482.7 319.6,481 320.6,479.1 321.6,478.7 322.6,480.3 323.6,483.4 324.6,478.4 325.6,480.4 326.6,483.7 327.6,484.7 328.6,481.5 329.6,483.2 330.6,481 331.6,483.5 332.6,483.1 333.6,478.8 334.6,482.2 335.6,482 336.6,481.9 337.6,481.4 338.6,483.6 339.6,479 340.6,482.8 341.6,481.2 342.6,479.9 343.6,483.4 344.6,484.4 345.6,481 346.6,481.4 347.6,480.3 348.6,478 349.6,482.6 350.6,483.2 351.6,481.6 352.6,480.9 353.6,482.2 354.6,481.3 355.6,481.2 356.6,483.9 357.6,482.8 358.6,481.8 359.6,478.6 360.6,481.8 361.6,481.7 362.6,481.1 363.6,480.9 364.6,482 365.6,481.8 366.6,481 367.6,480.2 368.6,480.8 369.6,482.5 370.6,484.7 371.6,480.1 372.6,480 373.6,478.9 374.6,483 375.6,481.4 376.6,478.5 377.6,483.4 378.6,481.1 379.6,482.4 380.6,482 381.6,479.2 382.6,484.7 383.6,479.4 384.6,481 385.6,480.9 386.6,481.5 387.6,482.7 388.6,481.8 389.6,480.5 390.6,480.2 391.6,480.7 392.6,478.7 393.6,480.9 394.6,479.7 395.6,484.9 396.6,481.9 397.6,480.9 398.6,481.1 399.6,482.1 400.6,482.2 401.6,482.2 402.6,482 403.6,481.5 404.6,484 405.6,483.6 406.6,481.5 407.6,481 408.6,482.4 409.6,478.3 410.6,481.1 411.6,478.3 412.6,480.3 413.6,482.3 414.6,481.7 415.6,480.7 416.6,479.6 417.6,482.3 418.6,480.4 419.6,479.2 420.6,484 421.6,478.8 422.6,481.8 423.6,482.4 424.6,482.7 425.6,481.4 426.6,480.7 427.6,480.5 428.6,480.9 429.6,481.7 430.6,482.6 431.6,482.2 432.6,482.4 433.6,483.2 434.6,483.1 435.6,480.7 436.6,479 437.6,480.1 438.6,479.7 439.6,482.4 440.6,483 441.6,480.7 442.6,486.1 443.6,482.6 444.6,480.3 445.6,479.3 446.6,482.7 447.6,480.8 448.6,482.3 449.6,480.6 450.6,480.8 451.6,480.8 452.6,482.7 453.6,482.2 454.6,481.8 455.6,481.5 456.6,482.4 457.6,484.2 458.6,482.9 459.6,480.4 460.6,480 461.6,482.4 462.6,482 463.6,481.7 464.6,481.9 465.6,481.2 466.6,483.3 467.6,480.7 468.6,482.5 469.6,480.9 470.6,483.4 471.6,482.9 472.6,482.2 473.6,481.1 474.6,478.6 475.6,481.7 476.6,481.2 477.6,481.4 478.6,479.6 479.6,483.8 480.6,482.2 481.6,479.4 482.6,477.7 483.6,479.7 484.6,481.5 485.6,482.3 486.6,478 487.6,479.5 488.6,478.5 489.6,481.7 490.6,480.2 491.6,485.4 492.6,481.5 493.6,479.9 494.6,482.4 495.6,483.2 496.6,482.5 497.6,480.8 498.6,481.6 499.6,480.5 500.6,482 501.6,481.9 502.6,480.8 503.6,482.8 504.6,482.1 505.6,483.1 506.6,481 507.6,483.2 508.6,484.3 509.6,482.7 510.6,482.4 511.6,480.1 512.6,478.8 513.6,481.6 514.6,483.7 515.6,481.3 516.6,478.7 517.6,482 518.6,483.7 519.6,482.7 520.6,480.6 521.6,481 522.6,482.6 523.6,482.2 524.6,478.3 525.6,481.8 526.6,483 527.6,482.7 528.6,483.2 529.6,480.3 530.6,481.2 531.6,481.8 532.6,483.1 533.6,482.5 534.6,479.4 535.6,482.4 536.6,482.6 537.6,482.4 538.6,481.7 539.6,483.4 540.6,481.6 541.6,482.7 542.6,481.5 543.6,481.9 544.6,482.4 545.6,482.6 546.6,478.6 547.6,485.2 548.6,481.4 549.6,480.5 550.6,481.8 551.6,482.8 552.6,480.1 553.6,481.8 554.6,483.1 555.6,482.1 556.6,481.3 557.6,480.1 558.6,479.5 559.6,480.4 560.6,482.2 561.6,482.2 562.6,482.4 563.6,481.2 564.6,480.2 565.6,479.1 566.6,478.2 567.6,477.5 568.6,482.6 569.6,482.4 570.6,481.9 571.6,483.6 572.6,481.1 573.6,479.3 574.6,481.8 575.6,481.6 576.6,479.5 577.6,482.2 578.6,483.2 579.6,482.3 580.6,482 581.6,485.8 582.6,481.8 583.6,484 584.6,481.6 585.6,483.3 586.6,479.6 587.6,484.5 588.6,481.9 589.6,484.2 590.6,480.9 591.6,485.3 592.6,481.7 593.6,480.4 594.6,478.6 595.6,479.9 596.6,481.5 597.6,481.5 598.6,481.3 599.6,482.4 600.6,480 601.6,479.8 602.6,484.4 603.6,482.9 604.6,483.9 605.6,479.8 606.6,482.4 607.6,481.2 608.6,482.1 609.6,481.7 610.6,480.1 611.6,480.8 612.6,480.4 613.6,481.7 614.6,478.8 615.6,479.9 616.6,483.1 617.6,480.3 618.6,481.2 619.6,481.1" fill="none" stroke="#8e352b" stroke-width="4.3" stroke-linejoin="miter" stroke-miterlimit="2.2"/>
<rect x="204.9" y="320.8" width="2.6" height="168.5" fill="#9a3428"/><rect x="487.3" y="320.8" width="2" height="168.5" fill="#9a3428"/><rect x="619" y="320.8" width="2" height="168.5" fill="#9a3428"/><rect x="204" y="320.8" width="437" height="168.5" fill="none" stroke="#10131c" stroke-width="1.3"/><path d="M227 320.8 v3.4 M227 489.3 v-3.4 M250 320.8 v3.4 M250 489.3 v-3.4 M273 320.8 v3.4 M273 489.3 v-3.4 M296 320.8 v3.4 M296 489.3 v-3.4 M319 320.8 v3.4 M319 489.3 v-3.4 M342 320.8 v3.4 M342 489.3 v-3.4 M365 320.8 v3.4 M365 489.3 v-3.4 M388 320.8 v3.4 M388 489.3 v-3.4 M411 320.8 v3.4 M411 489.3 v-3.4 M434 320.8 v3.4 M434 489.3 v-3.4 M457 320.8 v3.4 M457 489.3 v-3.4 M480 320.8 v3.4 M480 489.3 v-3.4 M503 320.8 v3.4 M503 489.3 v-3.4 M526 320.8 v3.4 M526 489.3 v-3.4 M549 320.8 v3.4 M549 489.3 v-3.4 M572 320.8 v3.4 M572 489.3 v-3.4 M595 320.8 v3.4 M595 489.3 v-3.4 M618 320.8 v3.4 M618 489.3 v-3.4 M208.6 320.8 v1.9 M208.6 489.3 v-1.9 M213.2 320.8 v1.9 M213.2 489.3 v-1.9 M217.8 320.8 v1.9 M217.8 489.3 v-1.9 M222.4 320.8 v1.9 M222.4 489.3 v-1.9 M231.6 320.8 v1.9 M231.6 489.3 v-1.9 M236.2 320.8 v1.9 M236.2 489.3 v-1.9 M240.8 320.8 v1.9 M240.8 489.3 v-1.9 M245.4 320.8 v1.9 M245.4 489.3 v-1.9 M254.6 320.8 v1.9 M254.6 489.3 v-1.9 M259.2 320.8 v1.9 M259.2 489.3 v-1.9 M263.8 320.8 v1.9 M263.8 489.3 v-1.9 M268.4 320.8 v1.9 M268.4 489.3 v-1.9 M277.6 320.8 v1.9 M277.6 489.3 v-1.9 M282.2 320.8 v1.9 M282.2 489.3 v-1.9 M286.8 320.8 v1.9 M286.8 489.3 v-1.9 M291.4 320.8 v1.9 M291.4 489.3 v-1.9 M300.6 320.8 v1.9 M300.6 489.3 v-1.9 M305.2 320.8 v1.9 M305.2 489.3 v-1.9 M309.8 320.8 v1.9 M309.8 489.3 v-1.9 M314.4 320.8 v1.9 M314.4 489.3 v-1.9 M323.6 320.8 v1.9 M323.6 489.3 v-1.9 M328.2 320.8 v1.9 M328.2 489.3 v-1.9 M332.8 320.8 v1.9 M332.8 489.3 v-1.9 M337.4 320.8 v1.9 M337.4 489.3 v-1.9 M346.6 320.8 v1.9 M346.6 489.3 v-1.9 M351.2 320.8 v1.9 M351.2 489.3 v-1.9 M355.8 320.8 v1.9 M355.8 489.3 v-1.9 M360.4 320.8 v1.9 M360.4 489.3 v-1.9 M369.6 320.8 v1.9 M369.6 489.3 v-1.9 M374.2 320.8 v1.9 M374.2 489.3 v-1.9 M378.8 320.8 v1.9 M378.8 489.3 v-1.9 M383.4 320.8 v1.9 M383.4 489.3 v-1.9 M392.6 320.8 v1.9 M392.6 489.3 v-1.9 M397.2 320.8 v1.9 M397.2 489.3 v-1.9 M401.8 320.8 v1.9 M401.8 489.3 v-1.9 M406.4 320.8 v1.9 M406.4 489.3 v-1.9 M415.6 320.8 v1.9 M415.6 489.3 v-1.9 M420.2 320.8 v1.9 M420.2 489.3 v-1.9 M424.8 320.8 v1.9 M424.8 489.3 v-1.9 M429.4 320.8 v1.9 M429.4 489.3 v-1.9 M438.6 320.8 v1.9 M438.6 489.3 v-1.9 M443.2 320.8 v1.9 M443.2 489.3 v-1.9 M447.8 320.8 v1.9 M447.8 489.3 v-1.9 M452.4 320.8 v1.9 M452.4 489.3 v-1.9 M461.6 320.8 v1.9 M461.6 489.3 v-1.9 M466.2 320.8 v1.9 M466.2 489.3 v-1.9 M470.8 320.8 v1.9 M470.8 489.3 v-1.9 M475.4 320.8 v1.9 M475.4 489.3 v-1.9 M484.6 320.8 v1.9 M484.6 489.3 v-1.9 M489.2 320.8 v1.9 M489.2 489.3 v-1.9 M493.8 320.8 v1.9 M493.8 489.3 v-1.9 M498.4 320.8 v1.9 M498.4 489.3 v-1.9 M507.6 320.8 v1.9 M507.6 489.3 v-1.9 M512.2 320.8 v1.9 M512.2 489.3 v-1.9 M516.8 320.8 v1.9 M516.8 489.3 v-1.9 M521.4 320.8 v1.9 M521.4 489.3 v-1.9 M530.6 320.8 v1.9 M530.6 489.3 v-1.9 M535.2 320.8 v1.9 M535.2 489.3 v-1.9 M539.8 320.8 v1.9 M539.8 489.3 v-1.9 M544.4 320.8 v1.9 M544.4 489.3 v-1.9 M553.6 320.8 v1.9 M553.6 489.3 v-1.9 M558.2 320.8 v1.9 M558.2 489.3 v-1.9 M562.8 320.8 v1.9 M562.8 489.3 v-1.9 M567.4 320.8 v1.9 M567.4 489.3 v-1.9 M576.6 320.8 v1.9 M576.6 489.3 v-1.9 M581.2 320.8 v1.9 M581.2 489.3 v-1.9 M585.8 320.8 v1.9 M585.8 489.3 v-1.9 M590.4 320.8 v1.9 M590.4 489.3 v-1.9 M599.6 320.8 v1.9 M599.6 489.3 v-1.9 M604.2 320.8 v1.9 M604.2 489.3 v-1.9 M608.8 320.8 v1.9 M608.8 489.3 v-1.9 M613.4 320.8 v1.9 M613.4 489.3 v-1.9 M622.6 320.8 v1.9 M622.6 489.3 v-1.9 M627.2 320.8 v1.9 M627.2 489.3 v-1.9 M631.8 320.8 v1.9 M631.8 489.3 v-1.9 M636.4 320.8 v1.9 M636.4 489.3 v-1.9 " stroke="#10131c" stroke-width="1" fill="none"/><rect x="208.8" y="323.8" width="35" height="18" fill="none" stroke="#10131c" stroke-width="1.2"/><path d="M208.8 333.3 H243.8" stroke="#10131c" stroke-width="1"/><text x="226.3" y="331.7" text-anchor="middle" font-family="Liberation Mono, monospace" font-size="8.6" fill="#10172a" stroke="#10172a" stroke-width="0.38">A</text><text x="211.3" y="340.5" font-family="Liberation Mono, monospace" font-size="8.6" fill="#10172a" stroke="#10172a" stroke-width="0.38">2</text><path d="M220.8 337.9 H237.8" stroke="#1fc3cb" stroke-width="1.4"/><rect x="602.5" y="324.3" width="33.8" height="17.5" fill="none" stroke="#10131c" stroke-width="1.2"/><path d="M602.5 333.8 H636.3" stroke="#10131c" stroke-width="1"/><text x="619.4" y="332.2" text-anchor="middle" font-family="Liberation Mono, monospace" font-size="8.6" fill="#10172a" stroke="#10172a" stroke-width="0.38">C</text><text x="605" y="340.5" font-family="Liberation Mono, monospace" font-size="8.6" fill="#10172a" stroke="#10172a" stroke-width="0.38">3</text><path d="M614.5 338.1 H630.3" stroke="#e2352b" stroke-width="1.4"/><rect x="208.8" y="469.5" width="34.5" height="16" fill="none" stroke="#10131c" stroke-width="1.2"/><text x="226" y="478" text-anchor="middle" font-family="Liberation Mono, monospace" font-size="8.6" fill="#10172a" stroke="#10172a" stroke-width="0.38">A</text><text x="192" y="501.3" font-family="Liberation Sans, sans-serif" font-size="9.2" fill="#141b2e" stroke="#141b2e" stroke-width="0.2" textLength="459.5" lengthAdjust="spacingAndGlyphs">00:0004:0008:0012:0016:0020:0000:0004:0008:0012:0016:0020:0000:0004:0008:0012:0016:0020:0000:0004:00</text><text x="192" y="512" font-family="Liberation Sans, sans-serif" font-size="9.2" fill="#141b2e" stroke="#141b2e" stroke-width="0.2" textLength="459.5" lengthAdjust="spacingAndGlyphs">03.0303.0303.0303.0303.0303.0304.0304.0304.0304.0304.0304.0305.0305.0305.0305.0305.0305.0306.0306.03</text><text x="352.4" y="310" font-family="Liberation Mono, monospace" font-size="9.4" fill="#10172a" stroke="#10172a" stroke-width="0.38" textLength="139.5" lengthAdjust="spacingAndGlyphs" >Last graphics of NM from 3.2024</text><text transform="translate(193.6 405.6) rotate(-90)" text-anchor="middle" font-family="Liberation Mono, monospace" font-size="9.4" fill="#10172a" stroke="#10172a" stroke-width="0.38" textLength="76.5" lengthAdjust="spacingAndGlyphs">impulse in minute</text><text x="368.8" y="526.3" font-family="Liberation Mono, monospace" font-size="9.4" fill="#10172a" stroke="#10172a" stroke-width="0.38" textLength="107" lengthAdjust="spacingAndGlyphs" >Time / Data registration</text><text x="375" y="545.6" font-family="Liberation Mono, monospace" font-size="9.4" fill="#10172a" stroke="#10172a" stroke-width="0.38" textLength="94.3" lengthAdjust="spacingAndGlyphs" >Graphics pressure gPa</text><path d="M227 558.6 V599.4 M250 558.6 V599.4 M273 558.6 V599.4 M296 558.6 V599.4 M319 558.6 V599.4 M342 558.6 V599.4 M365 558.6 V599.4 M388 558.6 V599.4 M411 558.6 V599.4 M434 558.6 V599.4 M457 558.6 V599.4 M480 558.6 V599.4 M503 558.6 V599.4 M526 558.6 V599.4 M549 558.6 V599.4 M572 558.6 V599.4 M595 558.6 V599.4 M618 558.6 V599.4" stroke="#0c1018" stroke-opacity="0.95" stroke-width="0.95" stroke-dasharray="1.1 4.2" fill="none"/><polyline points="204,600.3 230,600.3 248,598 271,596 289,597.5 307,596.4 325.5,592.7 343.6,591.4 361.8,588.2 380,586.4 389,582.7 407,578.6 425.5,576.4 443.6,573.6 461.8,571.8 480,569 502.7,568.2 516.4,564.5 534.5,561.8 552.7,561.4 571,560.5 589,561.4 598,559.5 607.3,558.4 621,558" fill="none" stroke="#2a5fd6" stroke-width="2.4" stroke-linejoin="round" stroke-linecap="round"/><rect x="204" y="557.6" width="437" height="42.8" fill="none" stroke="#10131c" stroke-width="1.3"/><path d="M227 557.6 v2.8 M227 600.4 v-2.8 M250 557.6 v2.8 M250 600.4 v-2.8 M273 557.6 v2.8 M273 600.4 v-2.8 M296 557.6 v2.8 M296 600.4 v-2.8 M319 557.6 v2.8 M319 600.4 v-2.8 M342 557.6 v2.8 M342 600.4 v-2.8 M365 557.6 v2.8 M365 600.4 v-2.8 M388 557.6 v2.8 M388 600.4 v-2.8 M411 557.6 v2.8 M411 600.4 v-2.8 M434 557.6 v2.8 M434 600.4 v-2.8 M457 557.6 v2.8 M457 600.4 v-2.8 M480 557.6 v2.8 M480 600.4 v-2.8 M503 557.6 v2.8 M503 600.4 v-2.8 M526 557.6 v2.8 M526 600.4 v-2.8 M549 557.6 v2.8 M549 600.4 v-2.8 M572 557.6 v2.8 M572 600.4 v-2.8 M595 557.6 v2.8 M595 600.4 v-2.8 M618 557.6 v2.8 M618 600.4 v-2.8 M208.6 557.6 v1.9 M208.6 600.4 v-1.9 M213.2 557.6 v1.9 M213.2 600.4 v-1.9 M217.8 557.6 v1.9 M217.8 600.4 v-1.9 M222.4 557.6 v1.9 M222.4 600.4 v-1.9 M231.6 557.6 v1.9 M231.6 600.4 v-1.9 M236.2 557.6 v1.9 M236.2 600.4 v-1.9 M240.8 557.6 v1.9 M240.8 600.4 v-1.9 M245.4 557.6 v1.9 M245.4 600.4 v-1.9 M254.6 557.6 v1.9 M254.6 600.4 v-1.9 M259.2 557.6 v1.9 M259.2 600.4 v-1.9 M263.8 557.6 v1.9 M263.8 600.4 v-1.9 M268.4 557.6 v1.9 M268.4 600.4 v-1.9 M277.6 557.6 v1.9 M277.6 600.4 v-1.9 M282.2 557.6 v1.9 M282.2 600.4 v-1.9 M286.8 557.6 v1.9 M286.8 600.4 v-1.9 M291.4 557.6 v1.9 M291.4 600.4 v-1.9 M300.6 557.6 v1.9 M300.6 600.4 v-1.9 M305.2 557.6 v1.9 M305.2 600.4 v-1.9 M309.8 557.6 v1.9 M309.8 600.4 v-1.9 M314.4 557.6 v1.9 M314.4 600.4 v-1.9 M323.6 557.6 v1.9 M323.6 600.4 v-1.9 M328.2 557.6 v1.9 M328.2 600.4 v-1.9 M332.8 557.6 v1.9 M332.8 600.4 v-1.9 M337.4 557.6 v1.9 M337.4 600.4 v-1.9 M346.6 557.6 v1.9 M346.6 600.4 v-1.9 M351.2 557.6 v1.9 M351.2 600.4 v-1.9 M355.8 557.6 v1.9 M355.8 600.4 v-1.9 M360.4 557.6 v1.9 M360.4 600.4 v-1.9 M369.6 557.6 v1.9 M369.6 600.4 v-1.9 M374.2 557.6 v1.9 M374.2 600.4 v-1.9 M378.8 557.6 v1.9 M378.8 600.4 v-1.9 M383.4 557.6 v1.9 M383.4 600.4 v-1.9 M392.6 557.6 v1.9 M392.6 600.4 v-1.9 M397.2 557.6 v1.9 M397.2 600.4 v-1.9 M401.8 557.6 v1.9 M401.8 600.4 v-1.9 M406.4 557.6 v1.9 M406.4 600.4 v-1.9 M415.6 557.6 v1.9 M415.6 600.4 v-1.9 M420.2 557.6 v1.9 M420.2 600.4 v-1.9 M424.8 557.6 v1.9 M424.8 600.4 v-1.9 M429.4 557.6 v1.9 M429.4 600.4 v-1.9 M438.6 557.6 v1.9 M438.6 600.4 v-1.9 M443.2 557.6 v1.9 M443.2 600.4 v-1.9 M447.8 557.6 v1.9 M447.8 600.4 v-1.9 M452.4 557.6 v1.9 M452.4 600.4 v-1.9 M461.6 557.6 v1.9 M461.6 600.4 v-1.9 M466.2 557.6 v1.9 M466.2 600.4 v-1.9 M470.8 557.6 v1.9 M470.8 600.4 v-1.9 M475.4 557.6 v1.9 M475.4 600.4 v-1.9 M484.6 557.6 v1.9 M484.6 600.4 v-1.9 M489.2 557.6 v1.9 M489.2 600.4 v-1.9 M493.8 557.6 v1.9 M493.8 600.4 v-1.9 M498.4 557.6 v1.9 M498.4 600.4 v-1.9 M507.6 557.6 v1.9 M507.6 600.4 v-1.9 M512.2 557.6 v1.9 M512.2 600.4 v-1.9 M516.8 557.6 v1.9 M516.8 600.4 v-1.9 M521.4 557.6 v1.9 M521.4 600.4 v-1.9 M530.6 557.6 v1.9 M530.6 600.4 v-1.9 M535.2 557.6 v1.9 M535.2 600.4 v-1.9 M539.8 557.6 v1.9 M539.8 600.4 v-1.9 M544.4 557.6 v1.9 M544.4 600.4 v-1.9 M553.6 557.6 v1.9 M553.6 600.4 v-1.9 M558.2 557.6 v1.9 M558.2 600.4 v-1.9 M562.8 557.6 v1.9 M562.8 600.4 v-1.9 M567.4 557.6 v1.9 M567.4 600.4 v-1.9 M576.6 557.6 v1.9 M576.6 600.4 v-1.9 M581.2 557.6 v1.9 M581.2 600.4 v-1.9 M585.8 557.6 v1.9 M585.8 600.4 v-1.9 M590.4 557.6 v1.9 M590.4 600.4 v-1.9 M599.6 557.6 v1.9 M599.6 600.4 v-1.9 M604.2 557.6 v1.9 M604.2 600.4 v-1.9 M608.8 557.6 v1.9 M608.8 600.4 v-1.9 M613.4 557.6 v1.9 M613.4 600.4 v-1.9 M622.6 557.6 v1.9 M622.6 600.4 v-1.9 M627.2 557.6 v1.9 M627.2 600.4 v-1.9 M631.8 557.6 v1.9 M631.8 600.4 v-1.9 M636.4 557.6 v1.9 M636.4 600.4 v-1.9 " stroke="#10131c" stroke-width="1" fill="none"/><text transform="translate(194 580) rotate(-90)" text-anchor="middle" font-family="Liberation Mono, monospace" font-size="9.4" fill="#10172a" stroke="#10172a" stroke-width="0.38" textLength="13.8" lengthAdjust="spacingAndGlyphs">gPa</text><text x="192" y="612.6" font-family="Liberation Sans, sans-serif" font-size="9.2" fill="#141b2e" stroke="#141b2e" stroke-width="0.2" textLength="459.5" lengthAdjust="spacingAndGlyphs">00:0004:0008:0012:0016:0020:0000:0004:0008:0012:0016:0020:0000:0004:0008:0012:0016:0020:0000:0004:00</text><text x="413" y="627.6" font-family="Liberation Mono, monospace" font-size="9.4" fill="#10172a" stroke="#10172a" stroke-width="0.38" textLength="18" lengthAdjust="spacingAndGlyphs" >Time</text></svg>
<div id="task" class="abs"></div>
<div class="abs" style="left:716px;top:649px;width:194px;height:20px;background:linear-gradient(90deg,rgba(150,205,226,0) 0,rgba(150,205,226,.55) 12%,rgba(150,205,226,.55) 85%,rgba(150,205,226,0) 100%)"></div>
<div id="menu" class="abs"><span>Меню</span></div>
<div class="tk abs" style="left:737.8px;top:636.2px;color:#6f8aa4">Gnuplot</div>
<div class="tk abs" style="left:737.8px;top:653.5px;color:#1a1f30;font-weight:bold;letter-spacing:-0.35px">Gnuplot <span style="font-weight:normal;color:#8ea2b6;letter-spacing:0.4px;margin-left:1.2px">&lt;2</span></div>
<div class="tk abs" style="left:813.6px;top:636px;color:#0c0e16;font-weight:bold;font-size:11.4px;letter-spacing:0.35px">Gnuplot <span style="font-weight:normal;color:#9ab0c2;font-size:9px">&lt;</span></div>
<svg class="layer" viewBox="0 0 1100 733"><g transform="translate(280.4 650.2) scale(0.663)"><circle r="16.6" fill="url(#smg)"/><ellipse cx="0" cy="-10.2" rx="10.5" ry="5" fill="#f1ecf0" opacity="0.85"/><circle cx="-7.1" cy="-4.6" r="5.7" fill="#e8956a" opacity="0.6"/><circle cx="-7.1" cy="-4.4" r="5.1" fill="#e6f3fa"/><circle cx="-7.1" cy="-4.2" r="4" fill="#62aacd"/><ellipse cx="-7.1" cy="-4.3" rx="3.3" ry="2.7" fill="#16161f"/><circle cx="7" cy="-4.6" r="5.7" fill="#e8956a" opacity="0.6"/><circle cx="7" cy="-4.4" r="5.1" fill="#e6f3fa"/><circle cx="7" cy="-4.2" r="4" fill="#62aacd"/><ellipse cx="7" cy="-4.3" rx="3.3" ry="2.7" fill="#16161f"/><path d="M-9 4 H9.1 Q8.4 12.8 0 12.8 Q-8.4 12.8 -9 4 Z" fill="#ececf4" stroke="#e07c10" stroke-width="0.9"/></g><polygon points="371.8,635.3 374.9,644.1 383.8,646.9 376.4,652.6 376.5,661.9 368.8,656.6 359.9,659.6 362.6,650.7 357,643.2 366.4,643" fill="url(#silver)" stroke="#dff2f8" stroke-width="1.6" stroke-linejoin="round"/><path d="M507.6 647 L512 646.6 L517.5 641.8 L519.6 642.6 Q521.6 650 519.6 657.4 L517.5 658.2 L512 653.4 L507.6 653 Z" fill="#1f8cab"/><ellipse cx="516.4" cy="650" rx="2.2" ry="6.3" fill="#d8e6ee"/><ellipse cx="516.2" cy="650" rx="1" ry="3.6" fill="#7a92a4"/><polygon points="528,651 541.5,643.6 551.8,650.6 538,661" fill="#2a86d8"/><polygon points="528,651 538,661 538,662.2 528,652.4" fill="#1a5aa8"/><polygon points="551.8,650.6 538,661 538,662.2 551.8,652" fill="#1f6cc0"/><polygon points="533.5,650.4 541.6,646 547,649.8 538.4,655.6" fill="#e8f2f8"/><polygon points="545.2,638.4 547.8,639.8 542,651 539.6,651.6 539.8,649.2" fill="#f09a28"/><polygon points="539.6,651.6 539.8,649.2 542,651" fill="#f4dcc0"/><rect x="567.6" y="640.4" width="16.2" height="13.2" fill="#1f4fae"/><rect x="568.6" y="641.4" width="14.2" height="11.2" fill="#2d62c8"/><rect x="574" y="653.6" width="5" height="3" fill="#dfe8ef"/><rect x="570.5" y="656.4" width="12" height="1.8" rx="0.9" fill="#eef4f8"/><circle cx="567.4" cy="653.4" r="6.3" fill="#d62a30"/><circle cx="567.4" cy="653.4" r="3.5" fill="none" stroke="#f4e6e6" stroke-width="1.4" stroke-dasharray="8 3"/><path d="M596.4 650.6 L601.6 658.8 L609 640.8" fill="none" stroke="#9db4c6" stroke-width="2.6" stroke-linejoin="round" stroke-linecap="round"/><path d="M597.2 650.4 L601.6 657.2 L608.4 641.2" fill="none" stroke="#e4eef6" stroke-width="1" /><path d="M610 639.4 Q613.6 641 614.4 645 L616.4 652.6 L616.8 659.2 L606.4 659.2 L607 654 Q609.8 650.6 608.6 646 Z" fill="#ee8a1c"/><path d="M606.6 655.4 H616.8 M608.6 650.6 H616" stroke="#b4500c" stroke-width="0.9"/><path d="M610.4 640.6 Q612.8 642.2 613.2 645.4" stroke="#fbd08a" stroke-width="1" fill="none"/><g fill="#0b0c10"><rect x="632.4" y="636.9" width="7.6" height="1.9"/><rect x="637.3" y="636.9" width="2.7" height="7"/><rect x="637.3" y="644.7" width="2.7" height="7"/><rect x="632.4" y="649.8" width="7.6" height="1.9"/><rect x="632.4" y="644.7" width="2.7" height="7"/><rect x="632.4" y="636.9" width="2.7" height="7"/><rect x="641.5" y="636.9" width="7.6" height="1.9"/><rect x="646.4" y="636.9" width="2.7" height="7"/><rect x="646.4" y="644.7" width="2.7" height="7"/><rect x="641.5" y="649.8" width="7.6" height="1.9"/><rect x="641.5" y="644.7" width="2.7" height="7"/><rect x="641.5" y="636.9" width="2.7" height="7"/><rect x="654.2" y="641.2" width="2.2" height="2.2"/><rect x="654.2" y="647.4" width="2.2" height="2.2"/><rect x="660" y="636.9" width="7.4" height="1.9"/><rect x="664.7" y="636.9" width="2.7" height="7"/><rect x="660.8" y="643.3" width="5.8" height="1.9"/><rect x="664.7" y="644.7" width="2.7" height="7"/><rect x="660" y="649.8" width="7.4" height="1.9"/><rect x="668.6" y="636.9" width="7.6" height="1.9"/><rect x="673.5" y="636.9" width="2.7" height="7"/><rect x="673.5" y="644.7" width="2.7" height="7"/><rect x="668.6" y="649.8" width="7.6" height="1.9"/><rect x="668.6" y="644.7" width="2.7" height="7"/><rect x="668.6" y="636.9" width="2.7" height="7"/></g><circle cx="696.8" cy="649.3" r="11.7" fill="#e66a18"/><circle cx="698" cy="646.8" r="8.4" fill="url(#ffx)"/><path d="M690.6 649.6 Q697 657 705.4 648.6 Q700.6 653.2 694.6 651.4 Z" fill="#162a5e"/><path d="M708.4 644.6 Q710 656 699.4 660.4 Q689.6 662 686 654 Q691.6 658.8 698.2 656.6 Q705.4 653.6 705.2 646 Z" fill="#ea6e1a"/><path d="M685.6 644.4 Q687 640 690.4 638.6 Q690.8 640.6 692.6 641 Q696 640.6 697.4 642.4 Q695.2 643.6 695.4 645.8 Q693.4 646 692.6 648 Q693.6 650.8 696.6 651.4 Q693 653.6 689.6 651.4 Q685.4 648.8 685.6 644.4 Z" fill="#f0841e"/><path d="M692.6 641 Q695.6 640.4 697.4 642.4 Q695.2 643.4 695.2 645.4 Q693 644.4 692.6 641 Z" fill="#f8c040"/><path d="M686.6 653.4 Q690 659.6 697 660.8 Q704 660.8 707.8 654.4 Q703 659.6 696.6 658.6 Q690.6 657.4 686.6 653.4 Z" fill="#c4400c"/><g opacity="0.9"><path d="M724.2 635.2 L733.4 646.2" stroke="#8fa4bc" stroke-width="2.3" stroke-linecap="butt"/><path d="M734 635.2 L723.6 646.2" stroke="#8fa4bc" stroke-width="1.2"/></g><g opacity="1"><path d="M724.2 652.4 L733.6 663.4" stroke="#1c2032" stroke-width="2.3" stroke-linecap="butt"/><path d="M734.2 652.4 L723.6 663.4" stroke="#1c2032" stroke-width="1.2"/></g><g opacity="1"><path d="M799 635.4 L809.4 647.4" stroke="#1c2032" stroke-width="2.3" stroke-linecap="butt"/><path d="M810 635.4 L798.4 647.4" stroke="#1c2032" stroke-width="1.2"/></g><rect x="876.6" y="639.2" width="22.6" height="17.4" rx="1.6" fill="#d4e6f0" stroke="#8fb0c4" stroke-width="0.9"/><rect x="878.2" y="641" width="19.4" height="12.8" fill="#14151a"/><path d="M879.4 642.6 L882 644 L879.4 645.4" stroke="#e8eef2" stroke-width="0.9" fill="none"/><rect x="883" y="646.2" width="3.6" height="0.9" fill="#e8eef2"/><rect x="885.6" y="656.4" width="4.6" height="2.4" fill="#b8ccd8"/><ellipse cx="887.9" cy="660.2" rx="8" ry="2.4" fill="#dde8ef" stroke="#9fb4c2" stroke-width="0.6"/><circle cx="887.9" cy="660" r="0.8" fill="#d88a2a"/><rect x="913.4" y="634" width="18.6" height="15.4" rx="1.5" fill="#e3eef5" opacity="0.8"/><rect x="913.4" y="651.2" width="18.6" height="15.4" rx="1.5" fill="#e3eef5" opacity="0.8"/><rect x="916.3" y="636" width="12.4" height="11.5" fill="#1f86ba"/><rect x="917.3" y="637" width="10.4" height="9.5" fill="#3aa0cc"/><rect x="919.6" y="641.4" width="5.8" height="4.2" rx="0.6" fill="#eef6fa"/><path d="M920.8 641.4 V639.8 Q922.5 637.8 924.2 639.8 V641.4" stroke="#eef6fa" stroke-width="1" fill="none"/><rect x="920.6" y="643" width="3.8" height="0.9" fill="#3a8ab0"/><rect x="916.9" y="653.4" width="11.9" height="11.3" fill="#d8242a"/><circle cx="922.8" cy="659.1" r="3.6" fill="none" stroke="#f6eaea" stroke-width="1.3"/><rect x="922.2" y="656.6" width="1.3" height="5" fill="#f6eaea"/><circle cx="912.6" cy="657.2" r="0.8" fill="#8a6a30"/><polygon points="937,649.6 941.4,652.9 937,656.2" fill="#23263a"/><path d="M421.4 281.6 L421.4 292.6 L423.9 290.4 L426 295.2 L428 294.3 L425.9 289.6 L429.3 289.5 Z" fill="#0c0c10" stroke="#cfe6ee" stroke-width="0.6"/></svg>
</div></div>
<div id="wm" class="abs"></div><div id="wmt" class="abs">Stepanov Slava | gelio@inbox.ru</div>
</body></html>
